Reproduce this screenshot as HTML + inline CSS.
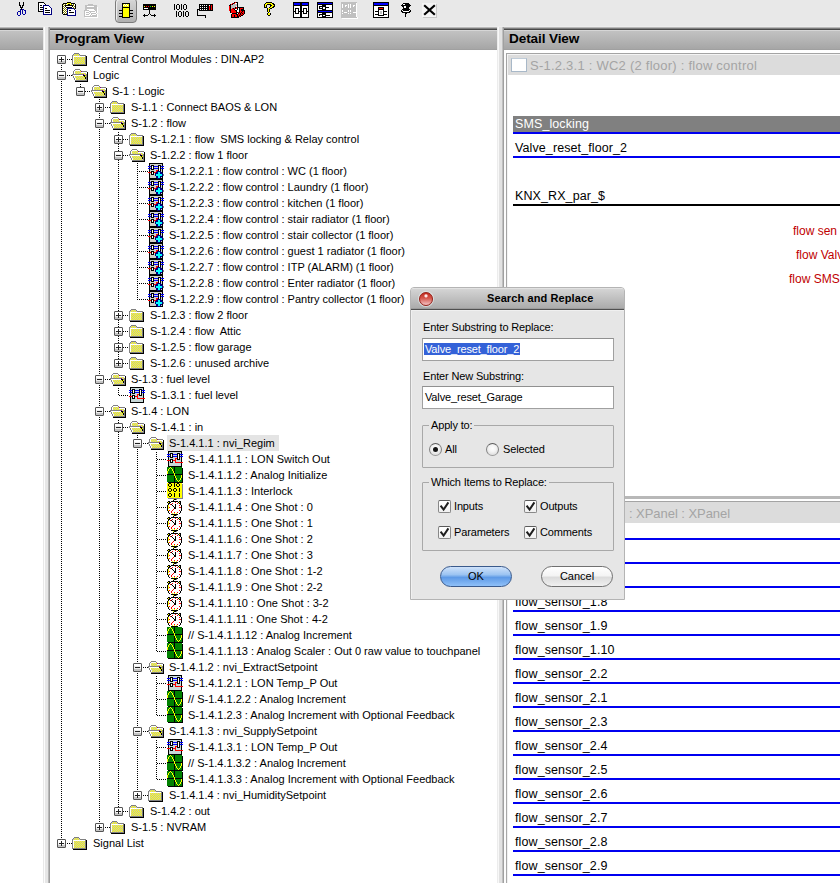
<!DOCTYPE html><html><head><meta charset="utf-8"><style>
*{margin:0;padding:0;box-sizing:border-box}
html,body{width:840px;height:883px;overflow:hidden;background:#e8e8e8;font-family:"Liberation Sans",sans-serif;position:relative}
.px{position:absolute;shape-rendering:crispEdges;overflow:visible}
.vd{position:absolute;width:1px;background:repeating-linear-gradient(to bottom,#000 0 1px,transparent 1px 2px)}
.hd{position:absolute;height:1px;background:repeating-linear-gradient(to right,#000 0 1px,transparent 1px 2px)}
.tt{position:absolute;font-size:11px;line-height:16px;height:16px;white-space:pre;color:#000}
.sel{position:absolute;height:16px;background:#e4e4e4}
.hdr{position:absolute;top:27px;height:23px;background:linear-gradient(to bottom,#bcbcbc 0,#b4b4b4 1px,#484848 2px,#484848 3px,#d6d6d6 3px,#d6d6d6 4px,#c2c2c2 4px,#a6a6a6 22px,#a0a0a0 22px)}
.hdr b{position:absolute;left:5px;top:4px;font-size:13.6px;line-height:16px;font-weight:bold;letter-spacing:-0.12px;color:#000;white-space:nowrap}
.white{position:absolute;background:#fff}
.dt{position:absolute;font-size:12.5px;line-height:16px;white-space:nowrap;color:#000;letter-spacing:0.1px}
.bl{position:absolute;left:513px;width:340px;height:2px;background:#0000f0}
.rt{position:absolute;font-size:12px;line-height:16px;white-space:nowrap;color:#c00000}
.mt{position:absolute;font-size:13px;line-height:18px;letter-spacing:0.24px;white-space:nowrap;color:#a4a4a4}
.cb{position:absolute;width:16px;height:14px;background:#fff;border:1px solid #a8b8c8;border-top-color:#c0ccd8}
#dlg{position:absolute;left:410px;top:287px;width:215px;height:313px;background:#e6e6e6;border:1px solid #b4b4b4;border-radius:4px 4px 0 0;box-shadow:inset 1px 1px 0 #f0f0f0}
.dtitle{position:absolute;left:0;top:0;width:213px;height:23px;border-radius:3px 3px 0 0;background:linear-gradient(to bottom,#e2e2e2 0,#e2e2e2 1px,#d4d4d4 1px,#acacac 20px,#9c9c9c 20px,#9c9c9c 21px,#505050 21px,#505050 22px,#f0f0f0 22px)}
.rbtn{position:absolute;left:8px;top:4px;width:14px;height:14px;border-radius:50%;border:1px solid #982018;background:radial-gradient(circle at 50% 24%,#ffffff 0,#fbe0e0 9%,rgba(255,255,255,0) 20%),linear-gradient(to bottom,#c42a1c 0%,#d65a50 45%,#f0b4b4 92%);box-shadow:0 0 0 1px rgba(235,240,240,0.6)}
.dttl{position:absolute;left:76px;top:3px;font-size:11px;line-height:14px;font-weight:bold;letter-spacing:0.1px;color:#000;white-space:nowrap}
.lab{position:absolute;font-size:11px;line-height:14px;white-space:nowrap;color:#000;letter-spacing:-0.15px}
.glab{background:#e6e6e6;padding:0 2px;margin-left:-2px}
.inp{position:absolute;width:192px;height:23px;background:#fff;border:1px solid #a0a0a0;border-top-color:#909090;font-size:11px;line-height:14px;padding:3px 0 0 1px;white-space:nowrap;letter-spacing:-0.15px}
.inp span{display:inline-block;padding:0 1px;height:12px;line-height:12px}
.inp .hl{background:#3462d8;color:#fff}
.grp{position:absolute;border:1px solid #a8a8a8;border-radius:1px}
.radio{position:absolute;width:13px;height:13px;border-radius:50%;border:1px solid #808080;border-top-color:#5c5c5c;border-bottom-color:#9a9a9a;background:radial-gradient(circle at 50% 40%,#ffffff 0,#f4f4f4 40%,#d0d0d0 100%)}
.radio.on::after{content:"";position:absolute;left:3px;top:3px;width:5px;height:5px;border-radius:50%;background:#161616}
.chk{position:absolute;width:13px;height:13px;border:1px solid #888;border-top-color:#5a5a5a;border-radius:2px;background:linear-gradient(#fff,#f0f0f0)}

.btn{position:absolute;width:72px;height:21px;border-radius:11px;border:1px solid #707070;font-size:11px;line-height:19px;text-align:center;color:#000;background:linear-gradient(to bottom,#ffffff 0,#f4f4f4 45%,#dcdcdc 55%,#f0f0f0 100%)}
.btn.ok{border-color:#3a5a8c;background:linear-gradient(to bottom,#cfe2fa 0,#9cc4f2 40%,#5e9ae6 55%,#8fc0f8 100%)}
</style></head><body><svg width="0" height="0" style="position:absolute"><symbol id="i-folder" viewBox="0 0 16 16"><rect x="2" y="2" width="5" height="1" fill="#808080"/><rect x="1" y="3" width="1" height="1" fill="#808080"/><rect x="2" y="3" width="1" height="1" fill="#c0c0c0"/><rect x="3" y="3" width="1" height="1" fill="#ffff00"/><rect x="4" y="3" width="1" height="1" fill="#c0c0c0"/><rect x="5" y="3" width="1" height="1" fill="#ffff00"/><rect x="6" y="3" width="1" height="1" fill="#c0c0c0"/><rect x="7" y="3" width="1" height="1" fill="#808080"/><rect x="0" y="4" width="1" height="1" fill="#808080"/><rect x="1" y="4" width="1" height="1" fill="#c0c0c0"/><rect x="2" y="4" width="1" height="1" fill="#ffff00"/><rect x="3" y="4" width="1" height="1" fill="#c0c0c0"/><rect x="4" y="4" width="1" height="1" fill="#ffff00"/><rect x="5" y="4" width="1" height="1" fill="#c0c0c0"/><rect x="6" y="4" width="1" height="1" fill="#ffff00"/><rect x="7" y="4" width="1" height="1" fill="#c0c0c0"/><rect x="8" y="4" width="6" height="1" fill="#808080"/><rect x="0" y="5" width="1" height="1" fill="#808080"/><rect x="1" y="5" width="12" height="1" fill="#ffffff"/><rect x="13" y="5" width="1" height="1" fill="#808080"/><rect x="14" y="5" width="1" height="1" fill="#000000"/><rect x="0" y="6" width="1" height="1" fill="#808080"/><rect x="1" y="6" width="1" height="1" fill="#ffffff"/><rect x="2" y="6" width="1" height="1" fill="#ffff00"/><rect x="3" y="6" width="1" height="1" fill="#c0c0c0"/><rect x="4" y="6" width="1" height="1" fill="#ffff00"/><rect x="5" y="6" width="1" height="1" fill="#c0c0c0"/><rect x="6" y="6" width="1" height="1" fill="#ffff00"/><rect x="7" y="6" width="1" height="1" fill="#c0c0c0"/><rect x="8" y="6" width="1" height="1" fill="#ffff00"/><rect x="9" y="6" width="1" height="1" fill="#c0c0c0"/><rect x="10" y="6" width="1" height="1" fill="#ffff00"/><rect x="11" y="6" width="1" height="1" fill="#c0c0c0"/><rect x="12" y="6" width="1" height="1" fill="#ffff00"/><rect x="13" y="6" width="1" height="1" fill="#808080"/><rect x="14" y="6" width="1" height="1" fill="#000000"/><rect x="0" y="7" width="1" height="1" fill="#808080"/><rect x="1" y="7" width="1" height="1" fill="#ffffff"/><rect x="2" y="7" width="1" height="1" fill="#c0c0c0"/><rect x="3" y="7" width="1" height="1" fill="#ffff00"/><rect x="4" y="7" width="1" height="1" fill="#c0c0c0"/><rect x="5" y="7" width="1" height="1" fill="#ffff00"/><rect x="6" y="7" width="1" height="1" fill="#c0c0c0"/><rect x="7" y="7" width="1" height="1" fill="#ffff00"/><rect x="8" y="7" width="1" height="1" fill="#c0c0c0"/><rect x="9" y="7" width="1" height="1" fill="#ffff00"/><rect x="10" y="7" width="1" height="1" fill="#c0c0c0"/><rect x="11" y="7" width="1" height="1" fill="#ffff00"/><rect x="12" y="7" width="1" height="1" fill="#c0c0c0"/><rect x="13" y="7" width="1" height="1" fill="#808080"/><rect x="14" y="7" width="1" height="1" fill="#000000"/><rect x="0" y="8" width="1" height="1" fill="#808080"/><rect x="1" y="8" width="1" height="1" fill="#ffffff"/><rect x="2" y="8" width="1" height="1" fill="#ffff00"/><rect x="3" y="8" width="1" height="1" fill="#c0c0c0"/><rect x="4" y="8" width="1" height="1" fill="#ffff00"/><rect x="5" y="8" width="1" height="1" fill="#c0c0c0"/><rect x="6" y="8" width="1" height="1" fill="#ffff00"/><rect x="7" y="8" width="1" height="1" fill="#c0c0c0"/><rect x="8" y="8" width="1" height="1" fill="#ffff00"/><rect x="9" y="8" width="1" height="1" fill="#c0c0c0"/><rect x="10" y="8" width="1" height="1" fill="#ffff00"/><rect x="11" y="8" width="1" height="1" fill="#c0c0c0"/><rect x="12" y="8" width="1" height="1" fill="#ffff00"/><rect x="13" y="8" width="1" height="1" fill="#808080"/><rect x="14" y="8" width="1" height="1" fill="#000000"/><rect x="0" y="9" width="1" height="1" fill="#808080"/><rect x="1" y="9" width="1" height="1" fill="#ffffff"/><rect x="2" y="9" width="1" height="1" fill="#c0c0c0"/><rect x="3" y="9" width="1" height="1" fill="#ffff00"/><rect x="4" y="9" width="1" height="1" fill="#c0c0c0"/><rect x="5" y="9" width="1" height="1" fill="#ffff00"/><rect x="6" y="9" width="1" height="1" fill="#c0c0c0"/><rect x="7" y="9" width="1" height="1" fill="#ffff00"/><rect x="8" y="9" width="1" height="1" fill="#c0c0c0"/><rect x="9" y="9" width="1" height="1" fill="#ffff00"/><rect x="10" y="9" width="1" height="1" fill="#c0c0c0"/><rect x="11" y="9" width="1" height="1" fill="#ffff00"/><rect x="12" y="9" width="1" height="1" fill="#c0c0c0"/><rect x="13" y="9" width="1" height="1" fill="#808080"/><rect x="14" y="9" width="1" height="1" fill="#000000"/><rect x="0" y="10" width="1" height="1" fill="#808080"/><rect x="1" y="10" width="1" height="1" fill="#ffffff"/><rect x="2" y="10" width="1" height="1" fill="#ffff00"/><rect x="3" y="10" width="1" height="1" fill="#c0c0c0"/><rect x="4" y="10" width="1" height="1" fill="#ffff00"/><rect x="5" y="10" width="1" height="1" fill="#c0c0c0"/><rect x="6" y="10" width="1" height="1" fill="#ffff00"/><rect x="7" y="10" width="1" height="1" fill="#c0c0c0"/><rect x="8" y="10" width="1" height="1" fill="#ffff00"/><rect x="9" y="10" width="1" height="1" fill="#c0c0c0"/><rect x="10" y="10" width="1" height="1" fill="#ffff00"/><rect x="11" y="10" width="1" height="1" fill="#c0c0c0"/><rect x="12" y="10" width="1" height="1" fill="#ffff00"/><rect x="13" y="10" width="1" height="1" fill="#808080"/><rect x="14" y="10" width="1" height="1" fill="#000000"/><rect x="0" y="11" width="1" height="1" fill="#808080"/><rect x="1" y="11" width="1" height="1" fill="#ffffff"/><rect x="2" y="11" width="1" height="1" fill="#c0c0c0"/><rect x="3" y="11" width="1" height="1" fill="#ffff00"/><rect x="4" y="11" width="1" height="1" fill="#c0c0c0"/><rect x="5" y="11" width="1" height="1" fill="#ffff00"/><rect x="6" y="11" width="1" height="1" fill="#c0c0c0"/><rect x="7" y="11" width="1" height="1" fill="#ffff00"/><rect x="8" y="11" width="1" height="1" fill="#c0c0c0"/><rect x="9" y="11" width="1" height="1" fill="#ffff00"/><rect x="10" y="11" width="1" height="1" fill="#c0c0c0"/><rect x="11" y="11" width="1" height="1" fill="#ffff00"/><rect x="12" y="11" width="1" height="1" fill="#c0c0c0"/><rect x="13" y="11" width="1" height="1" fill="#808080"/><rect x="14" y="11" width="1" height="1" fill="#000000"/><rect x="0" y="12" width="1" height="1" fill="#808080"/><rect x="1" y="12" width="1" height="1" fill="#ffffff"/><rect x="2" y="12" width="1" height="1" fill="#ffff00"/><rect x="3" y="12" width="1" height="1" fill="#c0c0c0"/><rect x="4" y="12" width="1" height="1" fill="#ffff00"/><rect x="5" y="12" width="1" height="1" fill="#c0c0c0"/><rect x="6" y="12" width="1" height="1" fill="#ffff00"/><rect x="7" y="12" width="1" height="1" fill="#c0c0c0"/><rect x="8" y="12" width="1" height="1" fill="#ffff00"/><rect x="9" y="12" width="1" height="1" fill="#c0c0c0"/><rect x="10" y="12" width="1" height="1" fill="#ffff00"/><rect x="11" y="12" width="1" height="1" fill="#c0c0c0"/><rect x="12" y="12" width="1" height="1" fill="#ffff00"/><rect x="13" y="12" width="1" height="1" fill="#808080"/><rect x="14" y="12" width="1" height="1" fill="#000000"/><rect x="0" y="13" width="14" height="1" fill="#808080"/><rect x="14" y="13" width="1" height="1" fill="#000000"/><rect x="1" y="14" width="14" height="1" fill="#000000"/></symbol><symbol id="i-ofolder" viewBox="0 0 16 16"><rect x="3" y="2" width="5" height="1" fill="#808080"/><rect x="2" y="3" width="1" height="1" fill="#808080"/><rect x="3" y="3" width="5" height="1" fill="#ffffff"/><rect x="8" y="3" width="1" height="1" fill="#808080"/><rect x="1" y="4" width="1" height="1" fill="#808080"/><rect x="2" y="4" width="1" height="1" fill="#ffffff"/><rect x="3" y="4" width="1" height="1" fill="#c0c0c0"/><rect x="4" y="4" width="1" height="1" fill="#ffff00"/><rect x="5" y="4" width="1" height="1" fill="#c0c0c0"/><rect x="6" y="4" width="1" height="1" fill="#ffff00"/><rect x="7" y="4" width="1" height="1" fill="#c0c0c0"/><rect x="8" y="4" width="1" height="1" fill="#ffff00"/><rect x="9" y="4" width="1" height="1" fill="#800080"/><rect x="10" y="4" width="5" height="1" fill="#808080"/><rect x="1" y="5" width="1" height="1" fill="#808080"/><rect x="2" y="5" width="1" height="1" fill="#ffffff"/><rect x="3" y="5" width="1" height="1" fill="#ffff00"/><rect x="4" y="5" width="1" height="1" fill="#c0c0c0"/><rect x="5" y="5" width="1" height="1" fill="#ffff00"/><rect x="6" y="5" width="1" height="1" fill="#c0c0c0"/><rect x="7" y="5" width="1" height="1" fill="#ffff00"/><rect x="8" y="5" width="1" height="1" fill="#c0c0c0"/><rect x="9" y="5" width="6" height="1" fill="#ffffff"/><rect x="15" y="5" width="1" height="1" fill="#000000"/><rect x="1" y="6" width="1" height="1" fill="#808080"/><rect x="2" y="6" width="1" height="1" fill="#ffffff"/><rect x="3" y="6" width="1" height="1" fill="#c0c0c0"/><rect x="4" y="6" width="1" height="1" fill="#ffff00"/><rect x="5" y="6" width="1" height="1" fill="#c0c0c0"/><rect x="6" y="6" width="1" height="1" fill="#ffff00"/><rect x="7" y="6" width="1" height="1" fill="#c0c0c0"/><rect x="8" y="6" width="1" height="1" fill="#ffff00"/><rect x="9" y="6" width="1" height="1" fill="#c0c0c0"/><rect x="10" y="6" width="1" height="1" fill="#ffff00"/><rect x="11" y="6" width="1" height="1" fill="#c0c0c0"/><rect x="12" y="6" width="1" height="1" fill="#ffff00"/><rect x="13" y="6" width="1" height="1" fill="#c0c0c0"/><rect x="14" y="6" width="1" height="1" fill="#ffffff"/><rect x="15" y="6" width="1" height="1" fill="#000000"/><rect x="0" y="7" width="11" height="1" fill="#808080"/><rect x="11" y="7" width="1" height="1" fill="#800080"/><rect x="12" y="7" width="1" height="1" fill="#c0c0c0"/><rect x="13" y="7" width="1" height="1" fill="#ffff00"/><rect x="14" y="7" width="1" height="1" fill="#808080"/><rect x="15" y="7" width="1" height="1" fill="#000000"/><rect x="0" y="8" width="1" height="1" fill="#808080"/><rect x="1" y="8" width="10" height="1" fill="#ffffff"/><rect x="11" y="8" width="2" height="1" fill="#000000"/><rect x="13" y="8" width="2" height="1" fill="#808080"/><rect x="15" y="8" width="1" height="1" fill="#000000"/><rect x="1" y="9" width="1" height="1" fill="#808080"/><rect x="2" y="9" width="1" height="1" fill="#ffffff"/><rect x="3" y="9" width="1" height="1" fill="#ffff00"/><rect x="4" y="9" width="1" height="1" fill="#c0c0c0"/><rect x="5" y="9" width="1" height="1" fill="#ffff00"/><rect x="6" y="9" width="1" height="1" fill="#c0c0c0"/><rect x="7" y="9" width="1" height="1" fill="#ffff00"/><rect x="8" y="9" width="1" height="1" fill="#c0c0c0"/><rect x="9" y="9" width="1" height="1" fill="#ffff00"/><rect x="10" y="9" width="1" height="1" fill="#c0c0c0"/><rect x="11" y="9" width="1" height="1" fill="#ffff00"/><rect x="12" y="9" width="1" height="1" fill="#000000"/><rect x="13" y="9" width="1" height="1" fill="#ffff00"/><rect x="14" y="9" width="1" height="1" fill="#808080"/><rect x="15" y="9" width="1" height="1" fill="#000000"/><rect x="1" y="10" width="1" height="1" fill="#808080"/><rect x="2" y="10" width="1" height="1" fill="#ffffff"/><rect x="3" y="10" width="1" height="1" fill="#c0c0c0"/><rect x="4" y="10" width="1" height="1" fill="#ffff00"/><rect x="5" y="10" width="1" height="1" fill="#c0c0c0"/><rect x="6" y="10" width="1" height="1" fill="#ffff00"/><rect x="7" y="10" width="1" height="1" fill="#c0c0c0"/><rect x="8" y="10" width="1" height="1" fill="#ffff00"/><rect x="9" y="10" width="1" height="1" fill="#c0c0c0"/><rect x="10" y="10" width="1" height="1" fill="#ffff00"/><rect x="11" y="10" width="1" height="1" fill="#c0c0c0"/><rect x="12" y="10" width="1" height="1" fill="#ffff00"/><rect x="13" y="10" width="1" height="1" fill="#000000"/><rect x="14" y="10" width="1" height="1" fill="#808080"/><rect x="15" y="10" width="1" height="1" fill="#000000"/><rect x="2" y="11" width="1" height="1" fill="#808080"/><rect x="3" y="11" width="1" height="1" fill="#ffffff"/><rect x="4" y="11" width="1" height="1" fill="#c0c0c0"/><rect x="5" y="11" width="1" height="1" fill="#ffff00"/><rect x="6" y="11" width="1" height="1" fill="#c0c0c0"/><rect x="7" y="11" width="1" height="1" fill="#ffff00"/><rect x="8" y="11" width="1" height="1" fill="#c0c0c0"/><rect x="9" y="11" width="1" height="1" fill="#ffff00"/><rect x="10" y="11" width="1" height="1" fill="#c0c0c0"/><rect x="11" y="11" width="1" height="1" fill="#ffff00"/><rect x="12" y="11" width="1" height="1" fill="#c0c0c0"/><rect x="13" y="11" width="1" height="1" fill="#000000"/><rect x="14" y="11" width="1" height="1" fill="#808080"/><rect x="15" y="11" width="1" height="1" fill="#000000"/><rect x="2" y="12" width="1" height="1" fill="#808080"/><rect x="3" y="12" width="1" height="1" fill="#ffffff"/><rect x="4" y="12" width="1" height="1" fill="#ffff00"/><rect x="5" y="12" width="1" height="1" fill="#c0c0c0"/><rect x="6" y="12" width="1" height="1" fill="#ffff00"/><rect x="7" y="12" width="1" height="1" fill="#c0c0c0"/><rect x="8" y="12" width="1" height="1" fill="#ffff00"/><rect x="9" y="12" width="1" height="1" fill="#c0c0c0"/><rect x="10" y="12" width="1" height="1" fill="#ffff00"/><rect x="11" y="12" width="1" height="1" fill="#c0c0c0"/><rect x="12" y="12" width="1" height="1" fill="#ffff00"/><rect x="13" y="12" width="1" height="1" fill="#c0c0c0"/><rect x="14" y="12" width="1" height="1" fill="#808080"/><rect x="15" y="12" width="1" height="1" fill="#000000"/><rect x="3" y="13" width="12" height="1" fill="#808080"/><rect x="15" y="13" width="1" height="1" fill="#000000"/><rect x="3" y="14" width="13" height="1" fill="#000000"/></symbol><symbol id="i-modplus" viewBox="0 0 16 16"><rect x="1" y="0" width="14" height="1" fill="#000000"/><rect x="1" y="1" width="1" height="1" fill="#000000"/><rect x="2" y="1" width="12" height="1" fill="#cfcfc8"/><rect x="14" y="1" width="1" height="1" fill="#000000"/><rect x="1" y="2" width="1" height="1" fill="#000000"/><rect x="2" y="2" width="1" height="1" fill="#cfcfc8"/><rect x="3" y="2" width="3" height="1" fill="#000000"/><rect x="6" y="2" width="4" height="1" fill="#cfcfc8"/><rect x="10" y="2" width="3" height="1" fill="#000000"/><rect x="13" y="2" width="1" height="1" fill="#cfcfc8"/><rect x="14" y="2" width="1" height="1" fill="#000000"/><rect x="0" y="3" width="3" height="1" fill="#0000ff"/><rect x="3" y="3" width="1" height="1" fill="#000000"/><rect x="4" y="3" width="1" height="1" fill="#ffffff"/><rect x="5" y="3" width="1" height="1" fill="#000000"/><rect x="6" y="3" width="4" height="1" fill="#0000ff"/><rect x="10" y="3" width="1" height="1" fill="#000000"/><rect x="11" y="3" width="1" height="1" fill="#ffffff"/><rect x="12" y="3" width="1" height="1" fill="#000000"/><rect x="13" y="3" width="3" height="1" fill="#0000ff"/><rect x="1" y="4" width="1" height="1" fill="#000000"/><rect x="2" y="4" width="1" height="1" fill="#cfcfc8"/><rect x="3" y="4" width="1" height="1" fill="#000000"/><rect x="4" y="4" width="1" height="1" fill="#ffffff"/><rect x="5" y="4" width="1" height="1" fill="#000000"/><rect x="6" y="4" width="4" height="1" fill="#cfcfc8"/><rect x="10" y="4" width="1" height="1" fill="#000000"/><rect x="11" y="4" width="1" height="1" fill="#ffffff"/><rect x="12" y="4" width="1" height="1" fill="#000000"/><rect x="13" y="4" width="1" height="1" fill="#cfcfc8"/><rect x="14" y="4" width="1" height="1" fill="#000000"/><rect x="0" y="5" width="3" height="1" fill="#0000ff"/><rect x="3" y="5" width="1" height="1" fill="#000000"/><rect x="4" y="5" width="1" height="1" fill="#ffffff"/><rect x="5" y="5" width="1" height="1" fill="#000000"/><rect x="6" y="5" width="4" height="1" fill="#0000ff"/><rect x="10" y="5" width="1" height="1" fill="#000000"/><rect x="11" y="5" width="1" height="1" fill="#ffffff"/><rect x="12" y="5" width="1" height="1" fill="#000000"/><rect x="13" y="5" width="3" height="1" fill="#0000ff"/><rect x="1" y="6" width="1" height="1" fill="#000000"/><rect x="2" y="6" width="1" height="1" fill="#cfcfc8"/><rect x="3" y="6" width="3" height="1" fill="#000000"/><rect x="6" y="6" width="4" height="1" fill="#cfcfc8"/><rect x="10" y="6" width="1" height="1" fill="#000000"/><rect x="11" y="6" width="1" height="1" fill="#ffffff"/><rect x="12" y="6" width="1" height="1" fill="#000000"/><rect x="13" y="6" width="1" height="1" fill="#cfcfc8"/><rect x="14" y="6" width="1" height="1" fill="#000000"/><rect x="1" y="7" width="1" height="1" fill="#000000"/><rect x="2" y="7" width="6" height="1" fill="#cfcfc8"/><rect x="8" y="7" width="2" height="1" fill="#ff0000"/><rect x="10" y="7" width="1" height="1" fill="#000000"/><rect x="11" y="7" width="1" height="1" fill="#ffffff"/><rect x="12" y="7" width="1" height="1" fill="#000000"/><rect x="13" y="7" width="1" height="1" fill="#cfcfc8"/><rect x="14" y="7" width="1" height="1" fill="#000000"/><rect x="1" y="8" width="1" height="1" fill="#000000"/><rect x="2" y="8" width="1" height="1" fill="#cfcfc8"/><rect x="3" y="8" width="3" height="1" fill="#000000"/><rect x="6" y="8" width="2" height="1" fill="#cfcfc8"/><rect x="8" y="8" width="1" height="1" fill="#ff0000"/><rect x="9" y="8" width="4" height="1" fill="#000080"/><rect x="13" y="8" width="1" height="1" fill="#cfcfc8"/><rect x="14" y="8" width="1" height="1" fill="#000000"/><rect x="0" y="9" width="3" height="1" fill="#ff0000"/><rect x="3" y="9" width="1" height="1" fill="#000000"/><rect x="4" y="9" width="1" height="1" fill="#ffffff"/><rect x="5" y="9" width="1" height="1" fill="#000000"/><rect x="6" y="9" width="2" height="1" fill="#ff0000"/><rect x="8" y="9" width="2" height="1" fill="#000080"/><rect x="10" y="9" width="2" height="1" fill="#00ffff"/><rect x="12" y="9" width="2" height="1" fill="#000080"/><rect x="14" y="9" width="1" height="1" fill="#000000"/><rect x="1" y="10" width="1" height="1" fill="#000000"/><rect x="2" y="10" width="1" height="1" fill="#cfcfc8"/><rect x="3" y="10" width="1" height="1" fill="#000000"/><rect x="4" y="10" width="1" height="1" fill="#ffffff"/><rect x="5" y="10" width="1" height="1" fill="#000000"/><rect x="6" y="10" width="1" height="1" fill="#cfcfc8"/><rect x="7" y="10" width="3" height="1" fill="#000080"/><rect x="10" y="10" width="2" height="1" fill="#00ffff"/><rect x="12" y="10" width="3" height="1" fill="#000080"/><rect x="1" y="11" width="1" height="1" fill="#000000"/><rect x="2" y="11" width="1" height="1" fill="#cfcfc8"/><rect x="3" y="11" width="3" height="1" fill="#000000"/><rect x="6" y="11" width="1" height="1" fill="#cfcfc8"/><rect x="7" y="11" width="1" height="1" fill="#000080"/><rect x="8" y="11" width="6" height="1" fill="#00ffff"/><rect x="14" y="11" width="1" height="1" fill="#000080"/><rect x="15" y="11" width="1" height="1" fill="#808080"/><rect x="1" y="12" width="1" height="1" fill="#000000"/><rect x="2" y="12" width="5" height="1" fill="#cfcfc8"/><rect x="7" y="12" width="1" height="1" fill="#000080"/><rect x="8" y="12" width="6" height="1" fill="#00ffff"/><rect x="14" y="12" width="1" height="1" fill="#000080"/><rect x="15" y="12" width="1" height="1" fill="#808080"/><rect x="1" y="13" width="1" height="1" fill="#000000"/><rect x="2" y="13" width="6" height="1" fill="#cfcfc8"/><rect x="8" y="13" width="2" height="1" fill="#000080"/><rect x="10" y="13" width="2" height="1" fill="#00ffff"/><rect x="12" y="13" width="2" height="1" fill="#000080"/><rect x="14" y="13" width="1" height="1" fill="#000000"/><rect x="1" y="14" width="1" height="1" fill="#000000"/><rect x="2" y="14" width="6" height="1" fill="#cfcfc8"/><rect x="8" y="14" width="2" height="1" fill="#000080"/><rect x="10" y="14" width="2" height="1" fill="#00ffff"/><rect x="12" y="14" width="1" height="1" fill="#000080"/><rect x="13" y="14" width="1" height="1" fill="#cfcfc8"/><rect x="14" y="14" width="1" height="1" fill="#000000"/><rect x="1" y="15" width="8" height="1" fill="#000000"/><rect x="9" y="15" width="3" height="1" fill="#000080"/><rect x="12" y="15" width="3" height="1" fill="#000000"/></symbol><symbol id="i-mod" viewBox="0 0 16 16"><rect x="1" y="0" width="14" height="1" fill="#000000"/><rect x="1" y="1" width="1" height="1" fill="#000000"/><rect x="2" y="1" width="12" height="1" fill="#c8d8d8"/><rect x="14" y="1" width="1" height="1" fill="#000000"/><rect x="1" y="2" width="1" height="1" fill="#000000"/><rect x="2" y="2" width="1" height="1" fill="#c8d8d8"/><rect x="3" y="2" width="3" height="1" fill="#000000"/><rect x="6" y="2" width="4" height="1" fill="#c8d8d8"/><rect x="10" y="2" width="3" height="1" fill="#000000"/><rect x="13" y="2" width="1" height="1" fill="#c8d8d8"/><rect x="14" y="2" width="1" height="1" fill="#000000"/><rect x="0" y="3" width="3" height="1" fill="#0000ff"/><rect x="3" y="3" width="1" height="1" fill="#000000"/><rect x="4" y="3" width="1" height="1" fill="#ffffff"/><rect x="5" y="3" width="1" height="1" fill="#000000"/><rect x="6" y="3" width="4" height="1" fill="#0000ff"/><rect x="10" y="3" width="1" height="1" fill="#000000"/><rect x="11" y="3" width="1" height="1" fill="#ffffff"/><rect x="12" y="3" width="1" height="1" fill="#000000"/><rect x="13" y="3" width="3" height="1" fill="#0000ff"/><rect x="1" y="4" width="1" height="1" fill="#000000"/><rect x="2" y="4" width="1" height="1" fill="#c8d8d8"/><rect x="3" y="4" width="1" height="1" fill="#000000"/><rect x="4" y="4" width="1" height="1" fill="#ffffff"/><rect x="5" y="4" width="1" height="1" fill="#000000"/><rect x="6" y="4" width="4" height="1" fill="#c8d8d8"/><rect x="10" y="4" width="1" height="1" fill="#000000"/><rect x="11" y="4" width="1" height="1" fill="#ffffff"/><rect x="12" y="4" width="1" height="1" fill="#000000"/><rect x="13" y="4" width="1" height="1" fill="#c8d8d8"/><rect x="14" y="4" width="1" height="1" fill="#000000"/><rect x="0" y="5" width="3" height="1" fill="#0000ff"/><rect x="3" y="5" width="1" height="1" fill="#000000"/><rect x="4" y="5" width="1" height="1" fill="#ffffff"/><rect x="5" y="5" width="1" height="1" fill="#000000"/><rect x="6" y="5" width="4" height="1" fill="#0000ff"/><rect x="10" y="5" width="1" height="1" fill="#000000"/><rect x="11" y="5" width="1" height="1" fill="#ffffff"/><rect x="12" y="5" width="1" height="1" fill="#000000"/><rect x="13" y="5" width="3" height="1" fill="#0000ff"/><rect x="1" y="6" width="1" height="1" fill="#000000"/><rect x="2" y="6" width="1" height="1" fill="#c8d8d8"/><rect x="3" y="6" width="3" height="1" fill="#000000"/><rect x="6" y="6" width="4" height="1" fill="#c8d8d8"/><rect x="10" y="6" width="1" height="1" fill="#000000"/><rect x="11" y="6" width="1" height="1" fill="#ffffff"/><rect x="12" y="6" width="1" height="1" fill="#000000"/><rect x="13" y="6" width="1" height="1" fill="#c8d8d8"/><rect x="14" y="6" width="1" height="1" fill="#000000"/><rect x="1" y="7" width="1" height="1" fill="#000000"/><rect x="2" y="7" width="6" height="1" fill="#c8d8d8"/><rect x="8" y="7" width="2" height="1" fill="#ff0000"/><rect x="10" y="7" width="1" height="1" fill="#000000"/><rect x="11" y="7" width="1" height="1" fill="#ffffff"/><rect x="12" y="7" width="1" height="1" fill="#000000"/><rect x="13" y="7" width="1" height="1" fill="#c8d8d8"/><rect x="14" y="7" width="1" height="1" fill="#000000"/><rect x="1" y="8" width="1" height="1" fill="#000000"/><rect x="2" y="8" width="1" height="1" fill="#c8d8d8"/><rect x="3" y="8" width="3" height="1" fill="#000000"/><rect x="6" y="8" width="2" height="1" fill="#c8d8d8"/><rect x="8" y="8" width="1" height="1" fill="#ff0000"/><rect x="9" y="8" width="1" height="1" fill="#c8d8d8"/><rect x="10" y="8" width="3" height="1" fill="#000000"/><rect x="13" y="8" width="1" height="1" fill="#c8d8d8"/><rect x="14" y="8" width="1" height="1" fill="#000000"/><rect x="0" y="9" width="3" height="1" fill="#ff0000"/><rect x="3" y="9" width="1" height="1" fill="#000000"/><rect x="4" y="9" width="1" height="1" fill="#ffffff"/><rect x="5" y="9" width="1" height="1" fill="#000000"/><rect x="6" y="9" width="3" height="1" fill="#ff0000"/><rect x="9" y="9" width="5" height="1" fill="#c8d8d8"/><rect x="14" y="9" width="1" height="1" fill="#000000"/><rect x="1" y="10" width="1" height="1" fill="#000000"/><rect x="2" y="10" width="1" height="1" fill="#c8d8d8"/><rect x="3" y="10" width="1" height="1" fill="#000000"/><rect x="4" y="10" width="1" height="1" fill="#ffffff"/><rect x="5" y="10" width="1" height="1" fill="#000000"/><rect x="6" y="10" width="2" height="1" fill="#c8d8d8"/><rect x="8" y="10" width="1" height="1" fill="#ff0000"/><rect x="9" y="10" width="5" height="1" fill="#c8d8d8"/><rect x="14" y="10" width="1" height="1" fill="#000000"/><rect x="1" y="11" width="1" height="1" fill="#000000"/><rect x="2" y="11" width="1" height="1" fill="#c8d8d8"/><rect x="3" y="11" width="3" height="1" fill="#000000"/><rect x="6" y="11" width="2" height="1" fill="#c8d8d8"/><rect x="8" y="11" width="8" height="1" fill="#ff0000"/><rect x="1" y="12" width="1" height="1" fill="#000000"/><rect x="2" y="12" width="12" height="1" fill="#c8d8d8"/><rect x="14" y="12" width="1" height="1" fill="#000000"/><rect x="1" y="13" width="1" height="1" fill="#000000"/><rect x="2" y="13" width="12" height="1" fill="#c8d8d8"/><rect x="14" y="13" width="1" height="1" fill="#000000"/><rect x="1" y="14" width="1" height="1" fill="#000000"/><rect x="2" y="14" width="12" height="1" fill="#c8d8d8"/><rect x="14" y="14" width="1" height="1" fill="#000000"/><rect x="1" y="15" width="14" height="1" fill="#000000"/></symbol><symbol id="i-wave" viewBox="0 0 16 16"><rect x="0" y="0" width="3" height="1" fill="#008000"/><rect x="3" y="0" width="1" height="1" fill="#ffff00"/><rect x="4" y="0" width="3" height="1" fill="#008000"/><rect x="7" y="0" width="1" height="1" fill="#000000"/><rect x="8" y="0" width="7" height="1" fill="#008000"/><rect x="0" y="1" width="2" height="1" fill="#008000"/><rect x="2" y="1" width="1" height="1" fill="#ffff00"/><rect x="3" y="1" width="1" height="1" fill="#008000"/><rect x="4" y="1" width="1" height="1" fill="#ffff00"/><rect x="5" y="1" width="2" height="1" fill="#008000"/><rect x="7" y="1" width="1" height="1" fill="#000000"/><rect x="8" y="1" width="7" height="1" fill="#008000"/><rect x="15" y="1" width="1" height="1" fill="#000000"/><rect x="0" y="2" width="1" height="1" fill="#008000"/><rect x="1" y="2" width="1" height="1" fill="#ffff00"/><rect x="2" y="2" width="3" height="1" fill="#008000"/><rect x="5" y="2" width="1" height="1" fill="#ffff00"/><rect x="6" y="2" width="1" height="1" fill="#008000"/><rect x="7" y="2" width="1" height="1" fill="#000000"/><rect x="8" y="2" width="7" height="1" fill="#008000"/><rect x="15" y="2" width="1" height="1" fill="#000000"/><rect x="0" y="3" width="1" height="1" fill="#008000"/><rect x="1" y="3" width="1" height="1" fill="#ffff00"/><rect x="2" y="3" width="3" height="1" fill="#008000"/><rect x="5" y="3" width="1" height="1" fill="#ffff00"/><rect x="6" y="3" width="1" height="1" fill="#008000"/><rect x="7" y="3" width="1" height="1" fill="#000000"/><rect x="8" y="3" width="7" height="1" fill="#008000"/><rect x="15" y="3" width="1" height="1" fill="#000000"/><rect x="0" y="4" width="1" height="1" fill="#ffff00"/><rect x="1" y="4" width="5" height="1" fill="#008000"/><rect x="6" y="4" width="1" height="1" fill="#ffff00"/><rect x="7" y="4" width="1" height="1" fill="#000000"/><rect x="8" y="4" width="7" height="1" fill="#008000"/><rect x="15" y="4" width="1" height="1" fill="#000000"/><rect x="0" y="5" width="1" height="1" fill="#ffff00"/><rect x="1" y="5" width="5" height="1" fill="#008000"/><rect x="6" y="5" width="1" height="1" fill="#ffff00"/><rect x="7" y="5" width="1" height="1" fill="#000000"/><rect x="8" y="5" width="7" height="1" fill="#008000"/><rect x="15" y="5" width="1" height="1" fill="#000000"/><rect x="0" y="6" width="1" height="1" fill="#ffff00"/><rect x="1" y="6" width="6" height="1" fill="#008000"/><rect x="7" y="6" width="1" height="1" fill="#ffff00"/><rect x="8" y="6" width="7" height="1" fill="#008000"/><rect x="15" y="6" width="1" height="1" fill="#000000"/><rect x="0" y="7" width="7" height="1" fill="#000000"/><rect x="7" y="7" width="1" height="1" fill="#ffff00"/><rect x="8" y="7" width="8" height="1" fill="#000000"/><rect x="0" y="8" width="7" height="1" fill="#008000"/><rect x="7" y="8" width="1" height="1" fill="#ffff00"/><rect x="8" y="8" width="6" height="1" fill="#008000"/><rect x="14" y="8" width="1" height="1" fill="#ffff00"/><rect x="15" y="8" width="1" height="1" fill="#000000"/><rect x="0" y="9" width="7" height="1" fill="#008000"/><rect x="7" y="9" width="1" height="1" fill="#000000"/><rect x="8" y="9" width="1" height="1" fill="#ffff00"/><rect x="9" y="9" width="5" height="1" fill="#008000"/><rect x="14" y="9" width="1" height="1" fill="#ffff00"/><rect x="15" y="9" width="1" height="1" fill="#000000"/><rect x="0" y="10" width="7" height="1" fill="#008000"/><rect x="7" y="10" width="1" height="1" fill="#000000"/><rect x="8" y="10" width="1" height="1" fill="#ffff00"/><rect x="9" y="10" width="5" height="1" fill="#008000"/><rect x="14" y="10" width="1" height="1" fill="#ffff00"/><rect x="15" y="10" width="1" height="1" fill="#000000"/><rect x="0" y="11" width="7" height="1" fill="#008000"/><rect x="7" y="11" width="1" height="1" fill="#000000"/><rect x="8" y="11" width="1" height="1" fill="#008000"/><rect x="9" y="11" width="1" height="1" fill="#ffff00"/><rect x="10" y="11" width="3" height="1" fill="#008000"/><rect x="13" y="11" width="1" height="1" fill="#ffff00"/><rect x="14" y="11" width="1" height="1" fill="#008000"/><rect x="15" y="11" width="1" height="1" fill="#000000"/><rect x="0" y="12" width="7" height="1" fill="#008000"/><rect x="7" y="12" width="1" height="1" fill="#000000"/><rect x="8" y="12" width="1" height="1" fill="#008000"/><rect x="9" y="12" width="1" height="1" fill="#ffff00"/><rect x="10" y="12" width="3" height="1" fill="#008000"/><rect x="13" y="12" width="1" height="1" fill="#ffff00"/><rect x="14" y="12" width="1" height="1" fill="#008000"/><rect x="15" y="12" width="1" height="1" fill="#000000"/><rect x="0" y="13" width="7" height="1" fill="#008000"/><rect x="7" y="13" width="1" height="1" fill="#000000"/><rect x="8" y="13" width="2" height="1" fill="#008000"/><rect x="10" y="13" width="1" height="1" fill="#ffff00"/><rect x="11" y="13" width="1" height="1" fill="#008000"/><rect x="12" y="13" width="1" height="1" fill="#ffff00"/><rect x="13" y="13" width="2" height="1" fill="#008000"/><rect x="15" y="13" width="1" height="1" fill="#000000"/><rect x="0" y="14" width="7" height="1" fill="#008000"/><rect x="7" y="14" width="1" height="1" fill="#000000"/><rect x="8" y="14" width="3" height="1" fill="#008000"/><rect x="11" y="14" width="1" height="1" fill="#ffff00"/><rect x="12" y="14" width="3" height="1" fill="#008000"/><rect x="15" y="14" width="1" height="1" fill="#000000"/><rect x="1" y="15" width="15" height="1" fill="#000000"/></symbol><symbol id="i-bin" viewBox="0 0 16 16"><rect x="0" y="0" width="2" height="1" fill="#ffff00"/><rect x="2" y="0" width="2" height="1" fill="#000000"/><rect x="4" y="0" width="3" height="1" fill="#ffff00"/><rect x="7" y="0" width="1" height="1" fill="#000000"/><rect x="8" y="0" width="2" height="1" fill="#ffff00"/><rect x="10" y="0" width="2" height="1" fill="#000000"/><rect x="12" y="0" width="3" height="1" fill="#ffff00"/><rect x="0" y="1" width="1" height="1" fill="#ffff00"/><rect x="1" y="1" width="1" height="1" fill="#000000"/><rect x="2" y="1" width="2" height="1" fill="#ffff00"/><rect x="4" y="1" width="1" height="1" fill="#000000"/><rect x="5" y="1" width="2" height="1" fill="#ffff00"/><rect x="7" y="1" width="1" height="1" fill="#000000"/><rect x="8" y="1" width="1" height="1" fill="#ffff00"/><rect x="9" y="1" width="1" height="1" fill="#000000"/><rect x="10" y="1" width="2" height="1" fill="#ffff00"/><rect x="12" y="1" width="1" height="1" fill="#000000"/><rect x="13" y="1" width="2" height="1" fill="#ffff00"/><rect x="15" y="1" width="1" height="1" fill="#808098"/><rect x="0" y="2" width="1" height="1" fill="#ffff00"/><rect x="1" y="2" width="1" height="1" fill="#000000"/><rect x="2" y="2" width="2" height="1" fill="#ffff00"/><rect x="4" y="2" width="1" height="1" fill="#000000"/><rect x="5" y="2" width="2" height="1" fill="#ffff00"/><rect x="7" y="2" width="1" height="1" fill="#000000"/><rect x="8" y="2" width="1" height="1" fill="#ffff00"/><rect x="9" y="2" width="1" height="1" fill="#000000"/><rect x="10" y="2" width="2" height="1" fill="#ffff00"/><rect x="12" y="2" width="1" height="1" fill="#000000"/><rect x="13" y="2" width="2" height="1" fill="#ffff00"/><rect x="15" y="2" width="1" height="1" fill="#808098"/><rect x="0" y="3" width="2" height="1" fill="#ffff00"/><rect x="2" y="3" width="2" height="1" fill="#000000"/><rect x="4" y="3" width="3" height="1" fill="#ffff00"/><rect x="7" y="3" width="1" height="1" fill="#000000"/><rect x="8" y="3" width="2" height="1" fill="#ffff00"/><rect x="10" y="3" width="2" height="1" fill="#000000"/><rect x="12" y="3" width="3" height="1" fill="#ffff00"/><rect x="15" y="3" width="1" height="1" fill="#808098"/><rect x="0" y="4" width="15" height="1" fill="#ffff00"/><rect x="15" y="4" width="1" height="1" fill="#808098"/><rect x="0" y="5" width="2" height="1" fill="#ffff00"/><rect x="2" y="5" width="2" height="1" fill="#000000"/><rect x="4" y="5" width="3" height="1" fill="#ffff00"/><rect x="7" y="5" width="2" height="1" fill="#000000"/><rect x="9" y="5" width="3" height="1" fill="#ffff00"/><rect x="12" y="5" width="1" height="1" fill="#000000"/><rect x="13" y="5" width="2" height="1" fill="#ffff00"/><rect x="15" y="5" width="1" height="1" fill="#808098"/><rect x="0" y="6" width="1" height="1" fill="#ffff00"/><rect x="1" y="6" width="1" height="1" fill="#000000"/><rect x="2" y="6" width="2" height="1" fill="#ffff00"/><rect x="4" y="6" width="1" height="1" fill="#000000"/><rect x="5" y="6" width="1" height="1" fill="#ffff00"/><rect x="6" y="6" width="1" height="1" fill="#000000"/><rect x="7" y="6" width="2" height="1" fill="#ffff00"/><rect x="9" y="6" width="1" height="1" fill="#000000"/><rect x="10" y="6" width="2" height="1" fill="#ffff00"/><rect x="12" y="6" width="1" height="1" fill="#000000"/><rect x="13" y="6" width="2" height="1" fill="#ffff00"/><rect x="15" y="6" width="1" height="1" fill="#808098"/><rect x="0" y="7" width="1" height="1" fill="#ffff00"/><rect x="1" y="7" width="1" height="1" fill="#000000"/><rect x="2" y="7" width="2" height="1" fill="#ffff00"/><rect x="4" y="7" width="1" height="1" fill="#000000"/><rect x="5" y="7" width="1" height="1" fill="#ffff00"/><rect x="6" y="7" width="1" height="1" fill="#000000"/><rect x="7" y="7" width="2" height="1" fill="#ffff00"/><rect x="9" y="7" width="1" height="1" fill="#000000"/><rect x="10" y="7" width="2" height="1" fill="#ffff00"/><rect x="12" y="7" width="1" height="1" fill="#000000"/><rect x="13" y="7" width="2" height="1" fill="#ffff00"/><rect x="15" y="7" width="1" height="1" fill="#808098"/><rect x="0" y="8" width="2" height="1" fill="#ffff00"/><rect x="2" y="8" width="2" height="1" fill="#000000"/><rect x="4" y="8" width="3" height="1" fill="#ffff00"/><rect x="7" y="8" width="2" height="1" fill="#000000"/><rect x="9" y="8" width="3" height="1" fill="#ffff00"/><rect x="12" y="8" width="1" height="1" fill="#000000"/><rect x="13" y="8" width="2" height="1" fill="#ffff00"/><rect x="15" y="8" width="1" height="1" fill="#808098"/><rect x="0" y="9" width="15" height="1" fill="#ffff00"/><rect x="15" y="9" width="1" height="1" fill="#808098"/><rect x="0" y="10" width="2" height="1" fill="#ffff00"/><rect x="2" y="10" width="2" height="1" fill="#000000"/><rect x="4" y="10" width="3" height="1" fill="#ffff00"/><rect x="7" y="10" width="1" height="1" fill="#000000"/><rect x="8" y="10" width="4" height="1" fill="#ffff00"/><rect x="12" y="10" width="1" height="1" fill="#000000"/><rect x="13" y="10" width="2" height="1" fill="#ffff00"/><rect x="15" y="10" width="1" height="1" fill="#808098"/><rect x="0" y="11" width="1" height="1" fill="#ffff00"/><rect x="1" y="11" width="1" height="1" fill="#000000"/><rect x="2" y="11" width="2" height="1" fill="#ffff00"/><rect x="4" y="11" width="1" height="1" fill="#000000"/><rect x="5" y="11" width="2" height="1" fill="#ffff00"/><rect x="7" y="11" width="1" height="1" fill="#000000"/><rect x="8" y="11" width="4" height="1" fill="#ffff00"/><rect x="12" y="11" width="1" height="1" fill="#000000"/><rect x="13" y="11" width="2" height="1" fill="#ffff00"/><rect x="15" y="11" width="1" height="1" fill="#808098"/><rect x="0" y="12" width="1" height="1" fill="#ffff00"/><rect x="1" y="12" width="1" height="1" fill="#000000"/><rect x="2" y="12" width="2" height="1" fill="#ffff00"/><rect x="4" y="12" width="1" height="1" fill="#000000"/><rect x="5" y="12" width="2" height="1" fill="#ffff00"/><rect x="7" y="12" width="1" height="1" fill="#000000"/><rect x="8" y="12" width="4" height="1" fill="#ffff00"/><rect x="12" y="12" width="1" height="1" fill="#000000"/><rect x="13" y="12" width="2" height="1" fill="#ffff00"/><rect x="15" y="12" width="1" height="1" fill="#808098"/><rect x="0" y="13" width="2" height="1" fill="#ffff00"/><rect x="2" y="13" width="2" height="1" fill="#000000"/><rect x="4" y="13" width="3" height="1" fill="#ffff00"/><rect x="7" y="13" width="1" height="1" fill="#000000"/><rect x="8" y="13" width="4" height="1" fill="#ffff00"/><rect x="12" y="13" width="1" height="1" fill="#000000"/><rect x="13" y="13" width="2" height="1" fill="#ffff00"/><rect x="15" y="13" width="1" height="1" fill="#808098"/><rect x="0" y="14" width="15" height="1" fill="#ffff00"/><rect x="15" y="14" width="1" height="1" fill="#808098"/><rect x="1" y="15" width="15" height="1" fill="#808098"/></symbol><symbol id="i-clock" viewBox="0 0 16 16"><rect x="6" y="0" width="1" height="1" fill="#ffff00"/><rect x="7" y="0" width="2" height="1" fill="#000000"/><rect x="9" y="0" width="1" height="1" fill="#808080"/><rect x="6" y="1" width="1" height="1" fill="#000000"/><rect x="1" y="2" width="2" height="1" fill="#000000"/><rect x="4" y="2" width="7" height="1" fill="#000000"/><rect x="12" y="2" width="2" height="1" fill="#000000"/><rect x="0" y="3" width="1" height="1" fill="#000000"/><rect x="1" y="3" width="1" height="1" fill="#ffff00"/><rect x="2" y="3" width="2" height="1" fill="#000000"/><rect x="4" y="3" width="4" height="1" fill="#ffffff"/><rect x="8" y="3" width="1" height="1" fill="#ff0000"/><rect x="9" y="3" width="2" height="1" fill="#ffffff"/><rect x="11" y="3" width="1" height="1" fill="#000000"/><rect x="12" y="3" width="1" height="1" fill="#ffff00"/><rect x="13" y="3" width="1" height="1" fill="#000000"/><rect x="1" y="4" width="2" height="1" fill="#000000"/><rect x="3" y="4" width="2" height="1" fill="#ffffff"/><rect x="5" y="4" width="1" height="1" fill="#ff0000"/><rect x="6" y="4" width="4" height="1" fill="#ffffff"/><rect x="10" y="4" width="1" height="1" fill="#ff0000"/><rect x="11" y="4" width="1" height="1" fill="#ffffff"/><rect x="12" y="4" width="2" height="1" fill="#000000"/><rect x="1" y="5" width="1" height="1" fill="#000000"/><rect x="2" y="5" width="1" height="1" fill="#ffffff"/><rect x="3" y="5" width="1" height="1" fill="#ff0000"/><rect x="4" y="5" width="1" height="1" fill="#000000"/><rect x="5" y="5" width="3" height="1" fill="#ffffff"/><rect x="8" y="5" width="1" height="1" fill="#000000"/><rect x="9" y="5" width="4" height="1" fill="#ffffff"/><rect x="13" y="5" width="1" height="1" fill="#000000"/><rect x="0" y="6" width="1" height="1" fill="#000000"/><rect x="1" y="6" width="1" height="1" fill="#ffff00"/><rect x="2" y="6" width="3" height="1" fill="#ffffff"/><rect x="5" y="6" width="1" height="1" fill="#000000"/><rect x="6" y="6" width="2" height="1" fill="#ffffff"/><rect x="8" y="6" width="1" height="1" fill="#000000"/><rect x="9" y="6" width="3" height="1" fill="#ffffff"/><rect x="12" y="6" width="1" height="1" fill="#ff0000"/><rect x="13" y="6" width="1" height="1" fill="#ffffff"/><rect x="14" y="6" width="1" height="1" fill="#000000"/><rect x="0" y="7" width="1" height="1" fill="#000000"/><rect x="1" y="7" width="1" height="1" fill="#ffff00"/><rect x="2" y="7" width="4" height="1" fill="#ffffff"/><rect x="6" y="7" width="1" height="1" fill="#000000"/><rect x="7" y="7" width="1" height="1" fill="#ffffff"/><rect x="8" y="7" width="1" height="1" fill="#000000"/><rect x="9" y="7" width="5" height="1" fill="#ffffff"/><rect x="14" y="7" width="1" height="1" fill="#000000"/><rect x="0" y="8" width="1" height="1" fill="#000000"/><rect x="1" y="8" width="1" height="1" fill="#ffff00"/><rect x="2" y="8" width="1" height="1" fill="#ff0000"/><rect x="3" y="8" width="4" height="1" fill="#ffffff"/><rect x="7" y="8" width="2" height="1" fill="#000000"/><rect x="9" y="8" width="3" height="1" fill="#ffffff"/><rect x="12" y="8" width="2" height="1" fill="#ff0000"/><rect x="14" y="8" width="1" height="1" fill="#000000"/><rect x="0" y="9" width="1" height="1" fill="#000000"/><rect x="1" y="9" width="1" height="1" fill="#ffff00"/><rect x="2" y="9" width="5" height="1" fill="#ffffff"/><rect x="7" y="9" width="2" height="1" fill="#000000"/><rect x="9" y="9" width="5" height="1" fill="#ffffff"/><rect x="14" y="9" width="1" height="1" fill="#000000"/><rect x="0" y="10" width="1" height="1" fill="#000000"/><rect x="1" y="10" width="5" height="1" fill="#ffffff"/><rect x="6" y="10" width="1" height="1" fill="#ff0000"/><rect x="7" y="10" width="7" height="1" fill="#ffffff"/><rect x="14" y="10" width="1" height="1" fill="#000000"/><rect x="0" y="11" width="1" height="1" fill="#000000"/><rect x="1" y="11" width="1" height="1" fill="#ffff00"/><rect x="2" y="11" width="1" height="1" fill="#ff0000"/><rect x="3" y="11" width="2" height="1" fill="#ffffff"/><rect x="5" y="11" width="1" height="1" fill="#ff0000"/><rect x="6" y="11" width="6" height="1" fill="#ffffff"/><rect x="12" y="11" width="1" height="1" fill="#ff0000"/><rect x="13" y="11" width="1" height="1" fill="#ffffff"/><rect x="14" y="11" width="1" height="1" fill="#000000"/><rect x="1" y="12" width="1" height="1" fill="#000000"/><rect x="2" y="12" width="2" height="1" fill="#ffffff"/><rect x="4" y="12" width="1" height="1" fill="#ff0000"/><rect x="5" y="12" width="8" height="1" fill="#ffffff"/><rect x="13" y="12" width="1" height="1" fill="#000000"/><rect x="1" y="13" width="1" height="1" fill="#000000"/><rect x="2" y="13" width="2" height="1" fill="#ffffff"/><rect x="4" y="13" width="1" height="1" fill="#ff0000"/><rect x="5" y="13" width="2" height="1" fill="#ffffff"/><rect x="7" y="13" width="1" height="1" fill="#ff0000"/><rect x="8" y="13" width="2" height="1" fill="#ffffff"/><rect x="10" y="13" width="1" height="1" fill="#ff0000"/><rect x="11" y="13" width="2" height="1" fill="#ffffff"/><rect x="13" y="13" width="1" height="1" fill="#000000"/><rect x="2" y="14" width="1" height="1" fill="#000000"/><rect x="3" y="14" width="2" height="1" fill="#ffffff"/><rect x="5" y="14" width="1" height="1" fill="#ffff00"/><rect x="6" y="14" width="1" height="1" fill="#ffffff"/><rect x="7" y="14" width="1" height="1" fill="#ffff00"/><rect x="8" y="14" width="1" height="1" fill="#ffffff"/><rect x="9" y="14" width="1" height="1" fill="#ffff00"/><rect x="10" y="14" width="2" height="1" fill="#ffffff"/><rect x="12" y="14" width="1" height="1" fill="#000000"/><rect x="4" y="15" width="7" height="1" fill="#000000"/></symbol><symbol id="i-plus" viewBox="0 0 9 9"><rect x="0" y="0" width="1" height="1" fill="#9a9a9a"/><rect x="1" y="0" width="7" height="1" fill="#545454"/><rect x="8" y="0" width="1" height="1" fill="#9a9a9a"/><rect x="0" y="1" width="1" height="1" fill="#545454"/><rect x="1" y="1" width="7" height="1" fill="#ffffff"/><rect x="8" y="1" width="1" height="1" fill="#545454"/><rect x="0" y="2" width="1" height="1" fill="#545454"/><rect x="1" y="2" width="3" height="1" fill="#ffffff"/><rect x="4" y="2" width="1" height="1" fill="#222222"/><rect x="5" y="2" width="3" height="1" fill="#ffffff"/><rect x="8" y="2" width="1" height="1" fill="#545454"/><rect x="0" y="3" width="1" height="1" fill="#545454"/><rect x="1" y="3" width="3" height="1" fill="#ffffff"/><rect x="4" y="3" width="1" height="1" fill="#222222"/><rect x="5" y="3" width="3" height="1" fill="#ffffff"/><rect x="8" y="3" width="1" height="1" fill="#545454"/><rect x="0" y="4" width="1" height="1" fill="#545454"/><rect x="1" y="4" width="1" height="1" fill="#eeeeee"/><rect x="2" y="4" width="5" height="1" fill="#222222"/><rect x="7" y="4" width="1" height="1" fill="#eeeeee"/><rect x="8" y="4" width="1" height="1" fill="#545454"/><rect x="0" y="5" width="1" height="1" fill="#545454"/><rect x="1" y="5" width="2" height="1" fill="#eeeeee"/><rect x="3" y="5" width="1" height="1" fill="#ffffff"/><rect x="4" y="5" width="1" height="1" fill="#222222"/><rect x="5" y="5" width="1" height="1" fill="#ffffff"/><rect x="6" y="5" width="2" height="1" fill="#eeeeee"/><rect x="8" y="5" width="1" height="1" fill="#545454"/><rect x="0" y="6" width="1" height="1" fill="#545454"/><rect x="1" y="6" width="3" height="1" fill="#c4c4c4"/><rect x="4" y="6" width="1" height="1" fill="#222222"/><rect x="5" y="6" width="3" height="1" fill="#c4c4c4"/><rect x="8" y="6" width="1" height="1" fill="#545454"/><rect x="0" y="7" width="1" height="1" fill="#545454"/><rect x="1" y="7" width="7" height="1" fill="#c4c4c4"/><rect x="8" y="7" width="1" height="1" fill="#545454"/><rect x="0" y="8" width="1" height="1" fill="#9a9a9a"/><rect x="1" y="8" width="7" height="1" fill="#545454"/><rect x="8" y="8" width="1" height="1" fill="#9a9a9a"/></symbol><symbol id="i-minus" viewBox="0 0 9 9"><rect x="0" y="0" width="1" height="1" fill="#9a9a9a"/><rect x="1" y="0" width="7" height="1" fill="#545454"/><rect x="8" y="0" width="1" height="1" fill="#9a9a9a"/><rect x="0" y="1" width="1" height="1" fill="#545454"/><rect x="1" y="1" width="7" height="1" fill="#ffffff"/><rect x="8" y="1" width="1" height="1" fill="#545454"/><rect x="0" y="2" width="1" height="1" fill="#545454"/><rect x="1" y="2" width="7" height="1" fill="#ffffff"/><rect x="8" y="2" width="1" height="1" fill="#545454"/><rect x="0" y="3" width="1" height="1" fill="#545454"/><rect x="1" y="3" width="6" height="1" fill="#eeeeee"/><rect x="7" y="3" width="1" height="1" fill="#ffffff"/><rect x="8" y="3" width="1" height="1" fill="#545454"/><rect x="0" y="4" width="1" height="1" fill="#545454"/><rect x="1" y="4" width="1" height="1" fill="#eeeeee"/><rect x="2" y="4" width="5" height="1" fill="#222222"/><rect x="7" y="4" width="1" height="1" fill="#eeeeee"/><rect x="8" y="4" width="1" height="1" fill="#545454"/><rect x="0" y="5" width="1" height="1" fill="#545454"/><rect x="1" y="5" width="6" height="1" fill="#eeeeee"/><rect x="7" y="5" width="1" height="1" fill="#ffffff"/><rect x="8" y="5" width="1" height="1" fill="#545454"/><rect x="0" y="6" width="1" height="1" fill="#545454"/><rect x="1" y="6" width="7" height="1" fill="#c4c4c4"/><rect x="8" y="6" width="1" height="1" fill="#545454"/><rect x="0" y="7" width="1" height="1" fill="#545454"/><rect x="1" y="7" width="7" height="1" fill="#c4c4c4"/><rect x="8" y="7" width="1" height="1" fill="#545454"/><rect x="0" y="8" width="1" height="1" fill="#9a9a9a"/><rect x="1" y="8" width="7" height="1" fill="#545454"/><rect x="8" y="8" width="1" height="1" fill="#9a9a9a"/></symbol></svg><div style="position:absolute;left:0;top:0;width:840px;height:27px;background:#e8e8e8"></div><div style="position:absolute;left:0;top:26px;width:840px;height:1px;background:#ececec"></div><svg class="px" style="left:14px;top:0px" width="16" height="16"><rect x="5" y="2" width="1" height="1" fill="#000000"/><rect x="9" y="2" width="1" height="1" fill="#000000"/><rect x="5" y="3" width="1" height="1" fill="#000000"/><rect x="9" y="3" width="1" height="1" fill="#000000"/><rect x="5" y="4" width="1" height="1" fill="#000000"/><rect x="9" y="4" width="1" height="1" fill="#000000"/><rect x="5" y="5" width="2" height="1" fill="#000000"/><rect x="8" y="5" width="2" height="1" fill="#000000"/><rect x="6" y="6" width="1" height="1" fill="#000000"/><rect x="8" y="6" width="1" height="1" fill="#000000"/><rect x="6" y="7" width="3" height="1" fill="#000000"/><rect x="7" y="8" width="1" height="1" fill="#000000"/><rect x="6" y="9" width="1" height="1" fill="#0000a0"/><rect x="7" y="9" width="1" height="1" fill="#000000"/><rect x="8" y="9" width="2" height="1" fill="#0000a0"/><rect x="6" y="10" width="1" height="1" fill="#0000a0"/><rect x="8" y="10" width="1" height="1" fill="#0000a0"/><rect x="10" y="10" width="2" height="1" fill="#0000a0"/><rect x="4" y="11" width="3" height="1" fill="#0000a0"/><rect x="8" y="11" width="1" height="1" fill="#0000a0"/><rect x="11" y="11" width="1" height="1" fill="#0000a0"/><rect x="3" y="12" width="1" height="1" fill="#0000a0"/><rect x="6" y="12" width="1" height="1" fill="#0000a0"/><rect x="8" y="12" width="1" height="1" fill="#0000a0"/><rect x="11" y="12" width="1" height="1" fill="#0000a0"/><rect x="3" y="13" width="1" height="1" fill="#0000a0"/><rect x="6" y="13" width="1" height="1" fill="#0000a0"/><rect x="8" y="13" width="1" height="1" fill="#0000a0"/><rect x="11" y="13" width="1" height="1" fill="#0000a0"/><rect x="3" y="14" width="1" height="1" fill="#0000a0"/><rect x="6" y="14" width="1" height="1" fill="#0000a0"/><rect x="9" y="14" width="2" height="1" fill="#0000a0"/><rect x="4" y="15" width="2" height="1" fill="#0000a0"/></svg><svg class="px" style="left:36px;top:0px" width="17" height="16"><rect x="2" y="2" width="6" height="1" fill="#000000"/><rect x="2" y="3" width="1" height="1" fill="#000000"/><rect x="3" y="3" width="5" height="1" fill="#ffffff"/><rect x="8" y="3" width="1" height="1" fill="#000000"/><rect x="2" y="4" width="1" height="1" fill="#000000"/><rect x="3" y="4" width="6" height="1" fill="#ffffff"/><rect x="9" y="4" width="1" height="1" fill="#000000"/><rect x="2" y="5" width="1" height="1" fill="#000000"/><rect x="3" y="5" width="1" height="1" fill="#ffffff"/><rect x="4" y="5" width="2" height="1" fill="#000000"/><rect x="6" y="5" width="1" height="1" fill="#ffffff"/><rect x="7" y="5" width="6" height="1" fill="#000080"/><rect x="2" y="6" width="1" height="1" fill="#000000"/><rect x="3" y="6" width="4" height="1" fill="#ffffff"/><rect x="7" y="6" width="1" height="1" fill="#000080"/><rect x="8" y="6" width="5" height="1" fill="#ffffff"/><rect x="13" y="6" width="1" height="1" fill="#000080"/><rect x="2" y="7" width="1" height="1" fill="#000000"/><rect x="3" y="7" width="1" height="1" fill="#ffffff"/><rect x="4" y="7" width="3" height="1" fill="#000000"/><rect x="7" y="7" width="1" height="1" fill="#000080"/><rect x="8" y="7" width="6" height="1" fill="#ffffff"/><rect x="14" y="7" width="1" height="1" fill="#000080"/><rect x="2" y="8" width="1" height="1" fill="#000000"/><rect x="3" y="8" width="4" height="1" fill="#ffffff"/><rect x="7" y="8" width="1" height="1" fill="#000080"/><rect x="8" y="8" width="1" height="1" fill="#ffffff"/><rect x="9" y="8" width="2" height="1" fill="#000000"/><rect x="11" y="8" width="4" height="1" fill="#ffffff"/><rect x="15" y="8" width="1" height="1" fill="#000080"/><rect x="2" y="9" width="1" height="1" fill="#000000"/><rect x="3" y="9" width="1" height="1" fill="#ffffff"/><rect x="4" y="9" width="3" height="1" fill="#000000"/><rect x="7" y="9" width="1" height="1" fill="#000080"/><rect x="8" y="9" width="7" height="1" fill="#ffffff"/><rect x="15" y="9" width="1" height="1" fill="#000080"/><rect x="2" y="10" width="1" height="1" fill="#000000"/><rect x="3" y="10" width="4" height="1" fill="#ffffff"/><rect x="7" y="10" width="1" height="1" fill="#000080"/><rect x="8" y="10" width="1" height="1" fill="#ffffff"/><rect x="9" y="10" width="5" height="1" fill="#000000"/><rect x="14" y="10" width="1" height="1" fill="#ffffff"/><rect x="15" y="10" width="1" height="1" fill="#000080"/><rect x="2" y="11" width="5" height="1" fill="#000000"/><rect x="7" y="11" width="1" height="1" fill="#000080"/><rect x="8" y="11" width="7" height="1" fill="#ffffff"/><rect x="15" y="11" width="1" height="1" fill="#000080"/><rect x="7" y="12" width="1" height="1" fill="#000080"/><rect x="8" y="12" width="1" height="1" fill="#ffffff"/><rect x="9" y="12" width="5" height="1" fill="#000000"/><rect x="14" y="12" width="1" height="1" fill="#ffffff"/><rect x="15" y="12" width="1" height="1" fill="#000080"/><rect x="7" y="13" width="1" height="1" fill="#000080"/><rect x="8" y="13" width="7" height="1" fill="#ffffff"/><rect x="15" y="13" width="1" height="1" fill="#000080"/><rect x="7" y="14" width="9" height="1" fill="#000080"/></svg><svg class="px" style="left:60px;top:0px" width="17" height="16"><rect x="7" y="2" width="4" height="1" fill="#000000"/><rect x="3" y="3" width="4" height="1" fill="#000000"/><rect x="7" y="3" width="4" height="1" fill="#ffff00"/><rect x="11" y="3" width="4" height="1" fill="#000000"/><rect x="2" y="4" width="1" height="1" fill="#000000"/><rect x="3" y="4" width="1" height="1" fill="#808000"/><rect x="4" y="4" width="1" height="1" fill="#ffffff"/><rect x="5" y="4" width="1" height="1" fill="#808000"/><rect x="6" y="4" width="1" height="1" fill="#ffffff"/><rect x="7" y="4" width="1" height="1" fill="#ffff00"/><rect x="8" y="4" width="2" height="1" fill="#000000"/><rect x="10" y="4" width="1" height="1" fill="#ffff00"/><rect x="11" y="4" width="1" height="1" fill="#808000"/><rect x="12" y="4" width="1" height="1" fill="#ffffff"/><rect x="13" y="4" width="1" height="1" fill="#808000"/><rect x="14" y="4" width="1" height="1" fill="#ffffff"/><rect x="15" y="4" width="1" height="1" fill="#000000"/><rect x="2" y="5" width="1" height="1" fill="#000000"/><rect x="3" y="5" width="1" height="1" fill="#ffffff"/><rect x="4" y="5" width="1" height="1" fill="#808000"/><rect x="5" y="5" width="8" height="1" fill="#000000"/><rect x="13" y="5" width="1" height="1" fill="#808000"/><rect x="14" y="5" width="1" height="1" fill="#ffffff"/><rect x="15" y="5" width="1" height="1" fill="#000000"/><rect x="2" y="6" width="1" height="1" fill="#000000"/><rect x="3" y="6" width="1" height="1" fill="#808000"/><rect x="4" y="6" width="1" height="1" fill="#ffffff"/><rect x="5" y="6" width="1" height="1" fill="#000000"/><rect x="6" y="6" width="6" height="1" fill="#ffffff"/><rect x="12" y="6" width="1" height="1" fill="#000000"/><rect x="13" y="6" width="1" height="1" fill="#ffffff"/><rect x="14" y="6" width="1" height="1" fill="#808000"/><rect x="15" y="6" width="1" height="1" fill="#000000"/><rect x="2" y="7" width="1" height="1" fill="#000000"/><rect x="3" y="7" width="1" height="1" fill="#ffffff"/><rect x="4" y="7" width="1" height="1" fill="#808000"/><rect x="5" y="7" width="1" height="1" fill="#ffffff"/><rect x="6" y="7" width="6" height="1" fill="#000000"/><rect x="12" y="7" width="1" height="1" fill="#ffffff"/><rect x="13" y="7" width="1" height="1" fill="#808000"/><rect x="14" y="7" width="1" height="1" fill="#ffffff"/><rect x="15" y="7" width="1" height="1" fill="#000000"/><rect x="2" y="8" width="1" height="1" fill="#000000"/><rect x="3" y="8" width="1" height="1" fill="#808000"/><rect x="4" y="8" width="1" height="1" fill="#ffffff"/><rect x="5" y="8" width="1" height="1" fill="#808000"/><rect x="6" y="8" width="1" height="1" fill="#ffffff"/><rect x="7" y="8" width="7" height="1" fill="#000080"/><rect x="14" y="8" width="1" height="1" fill="#808000"/><rect x="15" y="8" width="1" height="1" fill="#000000"/><rect x="2" y="9" width="1" height="1" fill="#000000"/><rect x="3" y="9" width="1" height="1" fill="#ffffff"/><rect x="4" y="9" width="1" height="1" fill="#808000"/><rect x="5" y="9" width="1" height="1" fill="#ffffff"/><rect x="6" y="9" width="1" height="1" fill="#808000"/><rect x="7" y="9" width="1" height="1" fill="#000080"/><rect x="8" y="9" width="6" height="1" fill="#ffffff"/><rect x="14" y="9" width="1" height="1" fill="#000080"/><rect x="2" y="10" width="1" height="1" fill="#000000"/><rect x="3" y="10" width="1" height="1" fill="#808000"/><rect x="4" y="10" width="1" height="1" fill="#ffffff"/><rect x="5" y="10" width="1" height="1" fill="#808000"/><rect x="6" y="10" width="1" height="1" fill="#ffffff"/><rect x="7" y="10" width="1" height="1" fill="#000080"/><rect x="8" y="10" width="1" height="1" fill="#ffffff"/><rect x="9" y="10" width="2" height="1" fill="#000000"/><rect x="11" y="10" width="4" height="1" fill="#ffffff"/><rect x="15" y="10" width="1" height="1" fill="#000080"/><rect x="2" y="11" width="1" height="1" fill="#000000"/><rect x="3" y="11" width="1" height="1" fill="#ffffff"/><rect x="4" y="11" width="1" height="1" fill="#808000"/><rect x="5" y="11" width="1" height="1" fill="#ffffff"/><rect x="6" y="11" width="1" height="1" fill="#808000"/><rect x="7" y="11" width="1" height="1" fill="#000080"/><rect x="8" y="11" width="7" height="1" fill="#ffffff"/><rect x="15" y="11" width="1" height="1" fill="#000080"/><rect x="2" y="12" width="1" height="1" fill="#000000"/><rect x="3" y="12" width="1" height="1" fill="#808000"/><rect x="4" y="12" width="1" height="1" fill="#ffffff"/><rect x="5" y="12" width="1" height="1" fill="#808000"/><rect x="6" y="12" width="1" height="1" fill="#ffffff"/><rect x="7" y="12" width="1" height="1" fill="#000080"/><rect x="8" y="12" width="1" height="1" fill="#ffffff"/><rect x="9" y="12" width="5" height="1" fill="#000000"/><rect x="14" y="12" width="1" height="1" fill="#ffffff"/><rect x="15" y="12" width="1" height="1" fill="#000080"/><rect x="2" y="13" width="1" height="1" fill="#000000"/><rect x="3" y="13" width="1" height="1" fill="#ffffff"/><rect x="4" y="13" width="1" height="1" fill="#808000"/><rect x="5" y="13" width="1" height="1" fill="#ffffff"/><rect x="6" y="13" width="1" height="1" fill="#808000"/><rect x="7" y="13" width="1" height="1" fill="#000080"/><rect x="8" y="13" width="7" height="1" fill="#ffffff"/><rect x="15" y="13" width="1" height="1" fill="#000080"/><rect x="3" y="14" width="4" height="1" fill="#000000"/><rect x="7" y="14" width="1" height="1" fill="#000080"/><rect x="8" y="14" width="7" height="1" fill="#ffffff"/><rect x="15" y="14" width="1" height="1" fill="#000080"/><rect x="7" y="15" width="9" height="1" fill="#000080"/></svg><svg class="px" style="left:82px;top:2px" width="17" height="16"><rect x="6" y="2" width="5" height="1" fill="#c0c0c0"/><rect x="3" y="3" width="12" height="1" fill="#c0c0c0"/><rect x="3" y="4" width="2" height="1" fill="#c0c0c0"/><rect x="5" y="4" width="7" height="1" fill="#ffffff"/><rect x="12" y="4" width="3" height="1" fill="#c0c0c0"/><rect x="3" y="5" width="12" height="1" fill="#c0c0c0"/><rect x="15" y="5" width="1" height="1" fill="#ffffff"/><rect x="3" y="6" width="12" height="1" fill="#c0c0c0"/><rect x="15" y="6" width="1" height="1" fill="#ffffff"/><rect x="3" y="7" width="2" height="1" fill="#c0c0c0"/><rect x="5" y="7" width="7" height="1" fill="#ffffff"/><rect x="12" y="7" width="3" height="1" fill="#c0c0c0"/><rect x="15" y="7" width="1" height="1" fill="#ffffff"/><rect x="2" y="8" width="5" height="1" fill="#c0c0c0"/><rect x="7" y="8" width="6" height="1" fill="#ffffff"/><rect x="13" y="8" width="2" height="1" fill="#c0c0c0"/><rect x="15" y="8" width="1" height="1" fill="#ffffff"/><rect x="2" y="9" width="1" height="1" fill="#c0c0c0"/><rect x="3" y="9" width="4" height="1" fill="#ffffff"/><rect x="7" y="9" width="6" height="1" fill="#c0c0c0"/><rect x="13" y="9" width="1" height="1" fill="#ffffff"/><rect x="14" y="9" width="1" height="1" fill="#c0c0c0"/><rect x="15" y="9" width="1" height="1" fill="#ffffff"/><rect x="2" y="10" width="1" height="1" fill="#c0c0c0"/><rect x="3" y="10" width="1" height="1" fill="#ffffff"/><rect x="4" y="10" width="3" height="1" fill="#c0c0c0"/><rect x="7" y="10" width="1" height="1" fill="#ffffff"/><rect x="8" y="10" width="1" height="1" fill="#c0c0c0"/><rect x="9" y="10" width="5" height="1" fill="#ffffff"/><rect x="14" y="10" width="1" height="1" fill="#c0c0c0"/><rect x="15" y="10" width="1" height="1" fill="#ffffff"/><rect x="2" y="11" width="1" height="1" fill="#c0c0c0"/><rect x="3" y="11" width="4" height="1" fill="#ffffff"/><rect x="7" y="11" width="1" height="1" fill="#c0c0c0"/><rect x="8" y="11" width="1" height="1" fill="#ffffff"/><rect x="9" y="11" width="5" height="1" fill="#c0c0c0"/><rect x="14" y="11" width="1" height="1" fill="#ffffff"/><rect x="2" y="12" width="1" height="1" fill="#c0c0c0"/><rect x="3" y="12" width="1" height="1" fill="#ffffff"/><rect x="4" y="12" width="3" height="1" fill="#c0c0c0"/><rect x="7" y="12" width="2" height="1" fill="#ffffff"/><rect x="9" y="12" width="1" height="1" fill="#c0c0c0"/><rect x="10" y="12" width="4" height="1" fill="#ffffff"/><rect x="14" y="12" width="1" height="1" fill="#c0c0c0"/><rect x="15" y="12" width="1" height="1" fill="#ffffff"/><rect x="2" y="13" width="1" height="1" fill="#c0c0c0"/><rect x="3" y="13" width="5" height="1" fill="#ffffff"/><rect x="8" y="13" width="1" height="1" fill="#c0c0c0"/><rect x="9" y="13" width="1" height="1" fill="#ffffff"/><rect x="10" y="13" width="5" height="1" fill="#c0c0c0"/><rect x="15" y="13" width="1" height="1" fill="#ffffff"/><rect x="2" y="14" width="13" height="1" fill="#c0c0c0"/><rect x="15" y="14" width="1" height="1" fill="#ffffff"/><rect x="3" y="15" width="13" height="1" fill="#ffffff"/></svg><div style="position:absolute;left:115px;top:-2px;width:22px;height:25px;border:1px solid #7a7a7a;border-radius:4px;background:linear-gradient(to bottom,#d6d6d6,#c4c4c4 50%,#b0b0b0);box-shadow:inset 1px 1px 1px #f0f0f0"></div><svg class="px" style="left:115px;top:0px" width="18" height="18"><rect x="7" y="3" width="8" height="1" fill="#000000"/><rect x="7" y="4" width="1" height="1" fill="#000000"/><rect x="8" y="4" width="1" height="1" fill="#ffff00"/><rect x="9" y="4" width="1" height="1" fill="#ffffff"/><rect x="10" y="4" width="1" height="1" fill="#ffff00"/><rect x="11" y="4" width="1" height="1" fill="#ffffff"/><rect x="12" y="4" width="2" height="1" fill="#ffff00"/><rect x="14" y="4" width="1" height="1" fill="#000000"/><rect x="7" y="5" width="1" height="1" fill="#000000"/><rect x="8" y="5" width="1" height="1" fill="#ffffff"/><rect x="9" y="5" width="1" height="1" fill="#ffff00"/><rect x="10" y="5" width="1" height="1" fill="#ffffff"/><rect x="11" y="5" width="1" height="1" fill="#ffff00"/><rect x="12" y="5" width="1" height="1" fill="#ffffff"/><rect x="13" y="5" width="1" height="1" fill="#ffff00"/><rect x="14" y="5" width="1" height="1" fill="#000000"/><rect x="7" y="6" width="1" height="1" fill="#000000"/><rect x="8" y="6" width="6" height="1" fill="#ffff00"/><rect x="14" y="6" width="1" height="1" fill="#000000"/><rect x="7" y="7" width="8" height="1" fill="#000000"/><rect x="7" y="8" width="1" height="1" fill="#000000"/><rect x="8" y="8" width="6" height="1" fill="#ffff00"/><rect x="14" y="8" width="1" height="1" fill="#000000"/><rect x="7" y="9" width="1" height="1" fill="#000000"/><rect x="8" y="9" width="6" height="1" fill="#ffff00"/><rect x="14" y="9" width="1" height="1" fill="#000000"/><rect x="4" y="10" width="4" height="1" fill="#000000"/><rect x="8" y="10" width="6" height="1" fill="#ffff00"/><rect x="14" y="10" width="4" height="1" fill="#000000"/><rect x="7" y="11" width="1" height="1" fill="#000000"/><rect x="8" y="11" width="6" height="1" fill="#ffff00"/><rect x="14" y="11" width="1" height="1" fill="#000000"/><rect x="7" y="12" width="1" height="1" fill="#000000"/><rect x="8" y="12" width="6" height="1" fill="#ffff00"/><rect x="14" y="12" width="1" height="1" fill="#000000"/><rect x="4" y="13" width="4" height="1" fill="#000000"/><rect x="8" y="13" width="6" height="1" fill="#ffff00"/><rect x="14" y="13" width="4" height="1" fill="#000000"/><rect x="7" y="14" width="1" height="1" fill="#000000"/><rect x="8" y="14" width="6" height="1" fill="#ffff00"/><rect x="14" y="14" width="1" height="1" fill="#000000"/><rect x="7" y="15" width="1" height="1" fill="#000000"/><rect x="8" y="15" width="6" height="1" fill="#ffff00"/><rect x="14" y="15" width="1" height="1" fill="#000000"/><rect x="4" y="16" width="4" height="1" fill="#000000"/><rect x="8" y="16" width="6" height="1" fill="#ffff00"/><rect x="14" y="16" width="4" height="1" fill="#000000"/><rect x="7" y="17" width="8" height="1" fill="#000000"/></svg><svg class="px" style="left:140px;top:0px" width="16" height="17"><rect x="3" y="4" width="13" height="1" fill="#000000"/><rect x="3" y="5" width="13" height="1" fill="#000000"/><rect x="3" y="6" width="1" height="1" fill="#000000"/><rect x="4" y="6" width="1" height="1" fill="#ffff00"/><rect x="5" y="6" width="1" height="1" fill="#000000"/><rect x="6" y="6" width="1" height="1" fill="#ff0000"/><rect x="7" y="6" width="1" height="1" fill="#000000"/><rect x="8" y="6" width="1" height="1" fill="#ff0000"/><rect x="9" y="6" width="1" height="1" fill="#000000"/><rect x="10" y="6" width="1" height="1" fill="#00e000"/><rect x="11" y="6" width="1" height="1" fill="#000000"/><rect x="12" y="6" width="1" height="1" fill="#ffff00"/><rect x="13" y="6" width="1" height="1" fill="#000000"/><rect x="14" y="6" width="1" height="1" fill="#ffff00"/><rect x="15" y="6" width="1" height="1" fill="#000000"/><rect x="3" y="7" width="13" height="1" fill="#000000"/><rect x="3" y="8" width="1" height="1" fill="#000000"/><rect x="4" y="8" width="4" height="1" fill="#ffffff"/><rect x="8" y="8" width="8" height="1" fill="#000000"/><rect x="3" y="9" width="13" height="1" fill="#000000"/><rect x="9" y="10" width="1" height="1" fill="#000000"/><rect x="9" y="11" width="1" height="1" fill="#000000"/><rect x="9" y="12" width="1" height="1" fill="#000000"/><rect x="9" y="13" width="1" height="1" fill="#000000"/><rect x="4" y="14" width="1" height="1" fill="#000000"/><rect x="8" y="14" width="1" height="1" fill="#000000"/><rect x="10" y="14" width="1" height="1" fill="#000000"/><rect x="14" y="14" width="1" height="1" fill="#000000"/><rect x="3" y="15" width="5" height="1" fill="#000000"/><rect x="11" y="15" width="5" height="1" fill="#000000"/><rect x="4" y="16" width="1" height="1" fill="#000000"/><rect x="14" y="16" width="1" height="1" fill="#000000"/></svg><svg class="px" style="left:170px;top:0px" width="19" height="17"><rect x="4" y="4" width="1" height="1" fill="#000000"/><rect x="7" y="4" width="2" height="1" fill="#000000"/><rect x="11" y="4" width="1" height="1" fill="#000000"/><rect x="14" y="4" width="2" height="1" fill="#000000"/><rect x="4" y="5" width="1" height="1" fill="#000000"/><rect x="6" y="5" width="1" height="1" fill="#000000"/><rect x="9" y="5" width="1" height="1" fill="#000000"/><rect x="11" y="5" width="1" height="1" fill="#000000"/><rect x="13" y="5" width="1" height="1" fill="#000000"/><rect x="16" y="5" width="1" height="1" fill="#000000"/><rect x="4" y="6" width="1" height="1" fill="#000000"/><rect x="6" y="6" width="1" height="1" fill="#000000"/><rect x="9" y="6" width="1" height="1" fill="#000000"/><rect x="11" y="6" width="1" height="1" fill="#000000"/><rect x="13" y="6" width="1" height="1" fill="#000000"/><rect x="16" y="6" width="1" height="1" fill="#000000"/><rect x="4" y="7" width="1" height="1" fill="#000000"/><rect x="6" y="7" width="1" height="1" fill="#000000"/><rect x="9" y="7" width="1" height="1" fill="#000000"/><rect x="11" y="7" width="1" height="1" fill="#000000"/><rect x="13" y="7" width="1" height="1" fill="#000000"/><rect x="16" y="7" width="1" height="1" fill="#000000"/><rect x="4" y="8" width="1" height="1" fill="#000000"/><rect x="6" y="8" width="1" height="1" fill="#000000"/><rect x="9" y="8" width="1" height="1" fill="#000000"/><rect x="11" y="8" width="1" height="1" fill="#000000"/><rect x="13" y="8" width="1" height="1" fill="#000000"/><rect x="16" y="8" width="1" height="1" fill="#000000"/><rect x="4" y="9" width="1" height="1" fill="#000000"/><rect x="7" y="9" width="2" height="1" fill="#000000"/><rect x="11" y="9" width="1" height="1" fill="#000000"/><rect x="14" y="9" width="2" height="1" fill="#000000"/><rect x="6" y="11" width="1" height="1" fill="#000000"/><rect x="9" y="11" width="2" height="1" fill="#000000"/><rect x="13" y="11" width="1" height="1" fill="#000000"/><rect x="16" y="11" width="2" height="1" fill="#000000"/><rect x="6" y="12" width="1" height="1" fill="#000000"/><rect x="8" y="12" width="1" height="1" fill="#000000"/><rect x="11" y="12" width="1" height="1" fill="#000000"/><rect x="13" y="12" width="1" height="1" fill="#000000"/><rect x="15" y="12" width="1" height="1" fill="#000000"/><rect x="18" y="12" width="1" height="1" fill="#000000"/><rect x="6" y="13" width="1" height="1" fill="#000000"/><rect x="8" y="13" width="1" height="1" fill="#000000"/><rect x="11" y="13" width="1" height="1" fill="#000000"/><rect x="13" y="13" width="1" height="1" fill="#000000"/><rect x="15" y="13" width="1" height="1" fill="#000000"/><rect x="18" y="13" width="1" height="1" fill="#000000"/><rect x="6" y="14" width="1" height="1" fill="#000000"/><rect x="8" y="14" width="1" height="1" fill="#000000"/><rect x="11" y="14" width="1" height="1" fill="#000000"/><rect x="13" y="14" width="1" height="1" fill="#000000"/><rect x="15" y="14" width="1" height="1" fill="#000000"/><rect x="18" y="14" width="1" height="1" fill="#000000"/><rect x="6" y="15" width="1" height="1" fill="#000000"/><rect x="8" y="15" width="1" height="1" fill="#000000"/><rect x="11" y="15" width="1" height="1" fill="#000000"/><rect x="13" y="15" width="1" height="1" fill="#000000"/><rect x="15" y="15" width="1" height="1" fill="#000000"/><rect x="18" y="15" width="1" height="1" fill="#000000"/><rect x="6" y="16" width="1" height="1" fill="#000000"/><rect x="9" y="16" width="2" height="1" fill="#000000"/><rect x="13" y="16" width="1" height="1" fill="#000000"/><rect x="16" y="16" width="2" height="1" fill="#000000"/></svg><svg class="px" style="left:194px;top:0px" width="19" height="18"><rect x="5" y="4" width="14" height="1" fill="#000000"/><rect x="5" y="5" width="1" height="1" fill="#000000"/><rect x="6" y="5" width="1" height="1" fill="#ffffff"/><rect x="7" y="5" width="1" height="1" fill="#000000"/><rect x="8" y="5" width="1" height="1" fill="#ffffff"/><rect x="9" y="5" width="1" height="1" fill="#000000"/><rect x="10" y="5" width="1" height="1" fill="#ffffff"/><rect x="11" y="5" width="1" height="1" fill="#000000"/><rect x="12" y="5" width="1" height="1" fill="#ffffff"/><rect x="13" y="5" width="2" height="1" fill="#000000"/><rect x="15" y="5" width="1" height="1" fill="#ffffff"/><rect x="16" y="5" width="1" height="1" fill="#000000"/><rect x="17" y="5" width="1" height="1" fill="#ff0000"/><rect x="18" y="5" width="1" height="1" fill="#000000"/><rect x="5" y="6" width="10" height="1" fill="#000000"/><rect x="15" y="6" width="1" height="1" fill="#ff0000"/><rect x="16" y="6" width="1" height="1" fill="#000000"/><rect x="17" y="6" width="1" height="1" fill="#ff0000"/><rect x="18" y="6" width="1" height="1" fill="#000000"/><rect x="5" y="7" width="1" height="1" fill="#000000"/><rect x="6" y="7" width="1" height="1" fill="#ffffff"/><rect x="7" y="7" width="1" height="1" fill="#000000"/><rect x="8" y="7" width="1" height="1" fill="#ffffff"/><rect x="9" y="7" width="1" height="1" fill="#000000"/><rect x="10" y="7" width="1" height="1" fill="#ffffff"/><rect x="11" y="7" width="1" height="1" fill="#000000"/><rect x="12" y="7" width="1" height="1" fill="#ffffff"/><rect x="13" y="7" width="2" height="1" fill="#000000"/><rect x="15" y="7" width="1" height="1" fill="#ff0000"/><rect x="16" y="7" width="1" height="1" fill="#000000"/><rect x="17" y="7" width="1" height="1" fill="#ff0000"/><rect x="18" y="7" width="1" height="1" fill="#000000"/><rect x="5" y="8" width="10" height="1" fill="#000000"/><rect x="15" y="8" width="1" height="1" fill="#ff0000"/><rect x="16" y="8" width="1" height="1" fill="#000000"/><rect x="17" y="8" width="1" height="1" fill="#ff0000"/><rect x="18" y="8" width="1" height="1" fill="#000000"/><rect x="3" y="9" width="3" height="1" fill="#000000"/><rect x="6" y="9" width="1" height="1" fill="#ffffff"/><rect x="7" y="9" width="1" height="1" fill="#000000"/><rect x="8" y="9" width="1" height="1" fill="#ffffff"/><rect x="9" y="9" width="1" height="1" fill="#000000"/><rect x="10" y="9" width="1" height="1" fill="#ffffff"/><rect x="11" y="9" width="1" height="1" fill="#000000"/><rect x="12" y="9" width="1" height="1" fill="#ffffff"/><rect x="13" y="9" width="2" height="1" fill="#000000"/><rect x="15" y="9" width="1" height="1" fill="#ff0000"/><rect x="16" y="9" width="1" height="1" fill="#000000"/><rect x="17" y="9" width="1" height="1" fill="#ff0000"/><rect x="18" y="9" width="1" height="1" fill="#000000"/><rect x="3" y="10" width="1" height="1" fill="#000000"/><rect x="5" y="10" width="14" height="1" fill="#000000"/><rect x="3" y="11" width="1" height="1" fill="#000000"/><rect x="3" y="12" width="1" height="1" fill="#000000"/><rect x="3" y="13" width="1" height="1" fill="#000000"/><rect x="3" y="14" width="1" height="1" fill="#000000"/><rect x="3" y="15" width="9" height="1" fill="#000000"/><rect x="11" y="16" width="1" height="1" fill="#000000"/><rect x="11" y="17" width="1" height="1" fill="#000000"/></svg><svg class="px" style="left:227px;top:1px" width="20" height="17"><rect x="7" y="1" width="1" height="1" fill="#000000"/><rect x="8" y="1" width="1" height="1" fill="#ff0000"/><rect x="9" y="1" width="2" height="1" fill="#000000"/><rect x="5" y="2" width="1" height="1" fill="#ff0000"/><rect x="6" y="2" width="1" height="1" fill="#000000"/><rect x="7" y="2" width="1" height="1" fill="#ff0000"/><rect x="8" y="2" width="2" height="1" fill="#ffffff"/><rect x="10" y="2" width="1" height="1" fill="#000000"/><rect x="3" y="3" width="1" height="1" fill="#000000"/><rect x="4" y="3" width="1" height="1" fill="#ff0000"/><rect x="5" y="3" width="1" height="1" fill="#000000"/><rect x="6" y="3" width="4" height="1" fill="#c0c0c0"/><rect x="10" y="3" width="1" height="1" fill="#000000"/><rect x="2" y="4" width="2" height="1" fill="#000000"/><rect x="4" y="4" width="6" height="1" fill="#c0c0c0"/><rect x="10" y="4" width="1" height="1" fill="#000000"/><rect x="2" y="5" width="1" height="1" fill="#ff0000"/><rect x="3" y="5" width="1" height="1" fill="#000000"/><rect x="4" y="5" width="5" height="1" fill="#c0c0c0"/><rect x="9" y="5" width="1" height="1" fill="#ffffff"/><rect x="10" y="5" width="1" height="1" fill="#000000"/><rect x="2" y="6" width="1" height="1" fill="#ff0000"/><rect x="3" y="6" width="1" height="1" fill="#000000"/><rect x="4" y="6" width="4" height="1" fill="#c0c0c0"/><rect x="8" y="6" width="1" height="1" fill="#000000"/><rect x="9" y="6" width="1" height="1" fill="#ff0000"/><rect x="10" y="6" width="7" height="1" fill="#000000"/><rect x="2" y="7" width="1" height="1" fill="#ff0000"/><rect x="3" y="7" width="1" height="1" fill="#000000"/><rect x="4" y="7" width="1" height="1" fill="#c0c0c0"/><rect x="5" y="7" width="1" height="1" fill="#ff0000"/><rect x="6" y="7" width="1" height="1" fill="#000000"/><rect x="7" y="7" width="1" height="1" fill="#ff0000"/><rect x="8" y="7" width="1" height="1" fill="#000000"/><rect x="9" y="7" width="1" height="1" fill="#ff0000"/><rect x="10" y="7" width="1" height="1" fill="#000000"/><rect x="11" y="7" width="1" height="1" fill="#ffffff"/><rect x="12" y="7" width="1" height="1" fill="#000000"/><rect x="13" y="7" width="3" height="1" fill="#ff0000"/><rect x="16" y="7" width="1" height="1" fill="#000000"/><rect x="2" y="8" width="1" height="1" fill="#ff0000"/><rect x="3" y="8" width="1" height="1" fill="#000000"/><rect x="4" y="8" width="3" height="1" fill="#ff0000"/><rect x="7" y="8" width="1" height="1" fill="#000000"/><rect x="8" y="8" width="2" height="1" fill="#ffffff"/><rect x="10" y="8" width="1" height="1" fill="#000000"/><rect x="11" y="8" width="1" height="1" fill="#ffffff"/><rect x="12" y="8" width="1" height="1" fill="#000000"/><rect x="13" y="8" width="1" height="1" fill="#ff0000"/><rect x="14" y="8" width="3" height="1" fill="#000000"/><rect x="2" y="9" width="1" height="1" fill="#ff0000"/><rect x="3" y="9" width="1" height="1" fill="#000000"/><rect x="4" y="9" width="4" height="1" fill="#ff0000"/><rect x="8" y="9" width="2" height="1" fill="#000000"/><rect x="10" y="9" width="2" height="1" fill="#ffffff"/><rect x="12" y="9" width="1" height="1" fill="#000000"/><rect x="13" y="9" width="1" height="1" fill="#ff0000"/><rect x="14" y="9" width="4" height="1" fill="#000000"/><rect x="3" y="10" width="1" height="1" fill="#000000"/><rect x="4" y="10" width="5" height="1" fill="#ff0000"/><rect x="9" y="10" width="1" height="1" fill="#000000"/><rect x="10" y="10" width="2" height="1" fill="#ffffff"/><rect x="12" y="10" width="1" height="1" fill="#000000"/><rect x="13" y="10" width="2" height="1" fill="#ff0000"/><rect x="15" y="10" width="1" height="1" fill="#000000"/><rect x="16" y="10" width="1" height="1" fill="#ff0000"/><rect x="17" y="10" width="1" height="1" fill="#000000"/><rect x="3" y="11" width="1" height="1" fill="#000000"/><rect x="4" y="11" width="5" height="1" fill="#ff0000"/><rect x="9" y="11" width="2" height="1" fill="#000000"/><rect x="11" y="11" width="1" height="1" fill="#ff0000"/><rect x="12" y="11" width="1" height="1" fill="#000000"/><rect x="13" y="11" width="1" height="1" fill="#ff0000"/><rect x="14" y="11" width="1" height="1" fill="#000000"/><rect x="15" y="11" width="2" height="1" fill="#ff0000"/><rect x="17" y="11" width="1" height="1" fill="#000000"/><rect x="5" y="12" width="5" height="1" fill="#000000"/><rect x="10" y="12" width="1" height="1" fill="#ffffff"/><rect x="11" y="12" width="1" height="1" fill="#000000"/><rect x="12" y="12" width="1" height="1" fill="#ff0000"/><rect x="13" y="12" width="1" height="1" fill="#000000"/><rect x="14" y="12" width="1" height="1" fill="#ff0000"/><rect x="15" y="12" width="1" height="1" fill="#000000"/><rect x="16" y="12" width="1" height="1" fill="#ff0000"/><rect x="17" y="12" width="1" height="1" fill="#000000"/><rect x="4" y="13" width="1" height="1" fill="#000000"/><rect x="5" y="13" width="4" height="1" fill="#ff0000"/><rect x="9" y="13" width="2" height="1" fill="#000000"/><rect x="11" y="13" width="2" height="1" fill="#ff0000"/><rect x="13" y="13" width="1" height="1" fill="#000000"/><rect x="14" y="13" width="2" height="1" fill="#ff0000"/><rect x="16" y="13" width="1" height="1" fill="#000000"/><rect x="4" y="14" width="1" height="1" fill="#000000"/><rect x="5" y="14" width="2" height="1" fill="#ff0000"/><rect x="7" y="14" width="1" height="1" fill="#000000"/><rect x="8" y="14" width="2" height="1" fill="#ff0000"/><rect x="10" y="14" width="1" height="1" fill="#000000"/><rect x="11" y="14" width="1" height="1" fill="#ff0000"/><rect x="12" y="14" width="1" height="1" fill="#000000"/><rect x="13" y="14" width="1" height="1" fill="#ff0000"/><rect x="14" y="14" width="2" height="1" fill="#000000"/><rect x="4" y="15" width="1" height="1" fill="#000000"/><rect x="5" y="15" width="2" height="1" fill="#ff0000"/><rect x="7" y="15" width="1" height="1" fill="#000000"/><rect x="8" y="15" width="2" height="1" fill="#ff0000"/><rect x="10" y="15" width="2" height="1" fill="#000000"/><rect x="12" y="15" width="1" height="1" fill="#ff0000"/><rect x="13" y="15" width="1" height="1" fill="#000000"/><rect x="4" y="16" width="8" height="1" fill="#000000"/></svg><svg class="px" style="left:260px;top:0px" width="18" height="16"><rect x="6" y="2" width="6" height="1" fill="#000000"/><rect x="5" y="3" width="1" height="1" fill="#000000"/><rect x="6" y="3" width="6" height="1" fill="#ffff00"/><rect x="12" y="3" width="2" height="1" fill="#000000"/><rect x="4" y="4" width="1" height="1" fill="#000000"/><rect x="5" y="4" width="2" height="1" fill="#ffff00"/><rect x="7" y="4" width="4" height="1" fill="#000000"/><rect x="11" y="4" width="2" height="1" fill="#ffff00"/><rect x="13" y="4" width="2" height="1" fill="#000000"/><rect x="4" y="5" width="1" height="1" fill="#000000"/><rect x="5" y="5" width="1" height="1" fill="#ffff00"/><rect x="6" y="5" width="1" height="1" fill="#000000"/><rect x="10" y="5" width="2" height="1" fill="#000000"/><rect x="12" y="5" width="2" height="1" fill="#ffff00"/><rect x="14" y="5" width="1" height="1" fill="#000000"/><rect x="4" y="6" width="1" height="1" fill="#000000"/><rect x="5" y="6" width="1" height="1" fill="#ffff00"/><rect x="6" y="6" width="1" height="1" fill="#000000"/><rect x="10" y="6" width="1" height="1" fill="#000000"/><rect x="11" y="6" width="2" height="1" fill="#ffff00"/><rect x="13" y="6" width="2" height="1" fill="#000000"/><rect x="4" y="7" width="3" height="1" fill="#000000"/><rect x="9" y="7" width="1" height="1" fill="#000000"/><rect x="10" y="7" width="2" height="1" fill="#ffff00"/><rect x="12" y="7" width="2" height="1" fill="#000000"/><rect x="7" y="8" width="1" height="1" fill="#000000"/><rect x="8" y="8" width="2" height="1" fill="#ffff00"/><rect x="10" y="8" width="2" height="1" fill="#000000"/><rect x="7" y="9" width="1" height="1" fill="#000000"/><rect x="8" y="9" width="1" height="1" fill="#ffff00"/><rect x="9" y="9" width="1" height="1" fill="#000000"/><rect x="7" y="10" width="1" height="1" fill="#000000"/><rect x="8" y="10" width="1" height="1" fill="#ffff00"/><rect x="9" y="10" width="1" height="1" fill="#000000"/><rect x="7" y="11" width="1" height="1" fill="#000000"/><rect x="8" y="11" width="1" height="1" fill="#ffff00"/><rect x="9" y="11" width="1" height="1" fill="#000000"/><rect x="8" y="12" width="1" height="1" fill="#000000"/><rect x="7" y="13" width="1" height="1" fill="#000000"/><rect x="8" y="13" width="2" height="1" fill="#ffff00"/><rect x="10" y="13" width="1" height="1" fill="#000000"/><rect x="7" y="14" width="1" height="1" fill="#000000"/><rect x="8" y="14" width="2" height="1" fill="#ffff00"/><rect x="10" y="14" width="1" height="1" fill="#000000"/><rect x="8" y="15" width="2" height="1" fill="#000000"/></svg><svg class="px" style="left:290px;top:0px" width="19" height="18"><rect x="3" y="2" width="16" height="1" fill="#000000"/><rect x="3" y="3" width="1" height="1" fill="#000000"/><rect x="4" y="3" width="6" height="1" fill="#0000ff"/><rect x="10" y="3" width="2" height="1" fill="#000000"/><rect x="12" y="3" width="6" height="1" fill="#0000ff"/><rect x="18" y="3" width="1" height="1" fill="#000000"/><rect x="3" y="4" width="1" height="1" fill="#000000"/><rect x="4" y="4" width="6" height="1" fill="#0000ff"/><rect x="10" y="4" width="2" height="1" fill="#000000"/><rect x="12" y="4" width="6" height="1" fill="#0000ff"/><rect x="18" y="4" width="1" height="1" fill="#000000"/><rect x="3" y="5" width="16" height="1" fill="#000000"/><rect x="3" y="6" width="1" height="1" fill="#000000"/><rect x="4" y="6" width="6" height="1" fill="#ffffff"/><rect x="10" y="6" width="2" height="1" fill="#000000"/><rect x="12" y="6" width="6" height="1" fill="#ffffff"/><rect x="18" y="6" width="1" height="1" fill="#000000"/><rect x="3" y="7" width="1" height="1" fill="#000000"/><rect x="4" y="7" width="6" height="1" fill="#ffffff"/><rect x="10" y="7" width="2" height="1" fill="#000000"/><rect x="12" y="7" width="6" height="1" fill="#ffffff"/><rect x="18" y="7" width="1" height="1" fill="#000000"/><rect x="3" y="8" width="1" height="1" fill="#000000"/><rect x="4" y="8" width="1" height="1" fill="#ffffff"/><rect x="5" y="8" width="4" height="1" fill="#000000"/><rect x="9" y="8" width="1" height="1" fill="#ffffff"/><rect x="10" y="8" width="2" height="1" fill="#000000"/><rect x="12" y="8" width="1" height="1" fill="#ffffff"/><rect x="13" y="8" width="4" height="1" fill="#000000"/><rect x="17" y="8" width="1" height="1" fill="#ffffff"/><rect x="18" y="8" width="1" height="1" fill="#000000"/><rect x="3" y="9" width="1" height="1" fill="#000000"/><rect x="4" y="9" width="1" height="1" fill="#ffffff"/><rect x="5" y="9" width="1" height="1" fill="#000000"/><rect x="6" y="9" width="2" height="1" fill="#ffffff"/><rect x="8" y="9" width="1" height="1" fill="#000000"/><rect x="9" y="9" width="1" height="1" fill="#ffffff"/><rect x="10" y="9" width="2" height="1" fill="#000000"/><rect x="12" y="9" width="1" height="1" fill="#ffffff"/><rect x="13" y="9" width="1" height="1" fill="#000000"/><rect x="14" y="9" width="2" height="1" fill="#ffffff"/><rect x="16" y="9" width="1" height="1" fill="#000000"/><rect x="17" y="9" width="1" height="1" fill="#ffffff"/><rect x="18" y="9" width="1" height="1" fill="#000000"/><rect x="3" y="10" width="1" height="1" fill="#000000"/><rect x="4" y="10" width="1" height="1" fill="#ffffff"/><rect x="5" y="10" width="1" height="1" fill="#000000"/><rect x="6" y="10" width="2" height="1" fill="#ffffff"/><rect x="8" y="10" width="1" height="1" fill="#000000"/><rect x="9" y="10" width="1" height="1" fill="#ffffff"/><rect x="10" y="10" width="2" height="1" fill="#000000"/><rect x="12" y="10" width="1" height="1" fill="#ffffff"/><rect x="13" y="10" width="1" height="1" fill="#000000"/><rect x="14" y="10" width="2" height="1" fill="#ffffff"/><rect x="16" y="10" width="1" height="1" fill="#000000"/><rect x="17" y="10" width="1" height="1" fill="#ffffff"/><rect x="18" y="10" width="1" height="1" fill="#000000"/><rect x="3" y="11" width="3" height="1" fill="#000000"/><rect x="6" y="11" width="2" height="1" fill="#ffffff"/><rect x="8" y="11" width="6" height="1" fill="#000000"/><rect x="14" y="11" width="2" height="1" fill="#ffffff"/><rect x="16" y="11" width="3" height="1" fill="#000000"/><rect x="3" y="12" width="1" height="1" fill="#000000"/><rect x="4" y="12" width="1" height="1" fill="#ffffff"/><rect x="5" y="12" width="1" height="1" fill="#000000"/><rect x="6" y="12" width="2" height="1" fill="#ffffff"/><rect x="8" y="12" width="1" height="1" fill="#000000"/><rect x="9" y="12" width="1" height="1" fill="#ffffff"/><rect x="10" y="12" width="2" height="1" fill="#000000"/><rect x="12" y="12" width="1" height="1" fill="#ffffff"/><rect x="13" y="12" width="1" height="1" fill="#000000"/><rect x="14" y="12" width="2" height="1" fill="#ffffff"/><rect x="16" y="12" width="1" height="1" fill="#000000"/><rect x="17" y="12" width="1" height="1" fill="#ffffff"/><rect x="18" y="12" width="1" height="1" fill="#000000"/><rect x="3" y="13" width="1" height="1" fill="#000000"/><rect x="4" y="13" width="1" height="1" fill="#ffffff"/><rect x="5" y="13" width="4" height="1" fill="#000000"/><rect x="9" y="13" width="1" height="1" fill="#ffffff"/><rect x="10" y="13" width="2" height="1" fill="#000000"/><rect x="12" y="13" width="1" height="1" fill="#ffffff"/><rect x="13" y="13" width="4" height="1" fill="#000000"/><rect x="17" y="13" width="1" height="1" fill="#ffffff"/><rect x="18" y="13" width="1" height="1" fill="#000000"/><rect x="3" y="14" width="1" height="1" fill="#000000"/><rect x="4" y="14" width="6" height="1" fill="#ffffff"/><rect x="10" y="14" width="2" height="1" fill="#000000"/><rect x="12" y="14" width="6" height="1" fill="#ffffff"/><rect x="18" y="14" width="1" height="1" fill="#000000"/><rect x="3" y="15" width="1" height="1" fill="#000000"/><rect x="4" y="15" width="6" height="1" fill="#ffffff"/><rect x="10" y="15" width="2" height="1" fill="#000000"/><rect x="12" y="15" width="6" height="1" fill="#ffffff"/><rect x="18" y="15" width="1" height="1" fill="#000000"/><rect x="3" y="16" width="1" height="1" fill="#000000"/><rect x="4" y="16" width="6" height="1" fill="#ffffff"/><rect x="10" y="16" width="2" height="1" fill="#000000"/><rect x="12" y="16" width="6" height="1" fill="#ffffff"/><rect x="18" y="16" width="1" height="1" fill="#000000"/><rect x="3" y="17" width="16" height="1" fill="#000000"/></svg><svg class="px" style="left:314px;top:0px" width="19" height="18"><rect x="3" y="2" width="16" height="1" fill="#000000"/><rect x="3" y="3" width="1" height="1" fill="#000000"/><rect x="4" y="3" width="14" height="1" fill="#0000ff"/><rect x="18" y="3" width="1" height="1" fill="#000000"/><rect x="3" y="4" width="16" height="1" fill="#000000"/><rect x="3" y="5" width="1" height="1" fill="#000000"/><rect x="4" y="5" width="4" height="1" fill="#ffffff"/><rect x="8" y="5" width="4" height="1" fill="#000000"/><rect x="12" y="5" width="6" height="1" fill="#ffffff"/><rect x="18" y="5" width="1" height="1" fill="#000000"/><rect x="3" y="6" width="1" height="1" fill="#000000"/><rect x="4" y="6" width="1" height="1" fill="#ffffff"/><rect x="5" y="6" width="7" height="1" fill="#000000"/><rect x="12" y="6" width="6" height="1" fill="#ffffff"/><rect x="18" y="6" width="1" height="1" fill="#000000"/><rect x="3" y="7" width="1" height="1" fill="#000000"/><rect x="4" y="7" width="1" height="1" fill="#ffffff"/><rect x="5" y="7" width="1" height="1" fill="#000000"/><rect x="6" y="7" width="2" height="1" fill="#ffffff"/><rect x="8" y="7" width="1" height="1" fill="#000000"/><rect x="9" y="7" width="2" height="1" fill="#ffffff"/><rect x="11" y="7" width="4" height="1" fill="#000000"/><rect x="15" y="7" width="3" height="1" fill="#ffffff"/><rect x="18" y="7" width="1" height="1" fill="#000000"/><rect x="3" y="8" width="1" height="1" fill="#000000"/><rect x="4" y="8" width="1" height="1" fill="#ffffff"/><rect x="5" y="8" width="4" height="1" fill="#000000"/><rect x="9" y="8" width="2" height="1" fill="#ffffff"/><rect x="11" y="8" width="1" height="1" fill="#000000"/><rect x="12" y="8" width="6" height="1" fill="#ffffff"/><rect x="18" y="8" width="1" height="1" fill="#000000"/><rect x="3" y="9" width="1" height="1" fill="#000000"/><rect x="4" y="9" width="4" height="1" fill="#ffffff"/><rect x="8" y="9" width="4" height="1" fill="#000000"/><rect x="12" y="9" width="6" height="1" fill="#ffffff"/><rect x="18" y="9" width="1" height="1" fill="#000000"/><rect x="3" y="10" width="16" height="1" fill="#000000"/><rect x="3" y="11" width="1" height="1" fill="#000000"/><rect x="4" y="11" width="14" height="1" fill="#0000ff"/><rect x="18" y="11" width="1" height="1" fill="#000000"/><rect x="3" y="12" width="16" height="1" fill="#000000"/><rect x="3" y="13" width="1" height="1" fill="#000000"/><rect x="4" y="13" width="4" height="1" fill="#ffffff"/><rect x="8" y="13" width="4" height="1" fill="#000000"/><rect x="12" y="13" width="6" height="1" fill="#ffffff"/><rect x="18" y="13" width="1" height="1" fill="#000000"/><rect x="3" y="14" width="1" height="1" fill="#000000"/><rect x="4" y="14" width="1" height="1" fill="#ffffff"/><rect x="5" y="14" width="7" height="1" fill="#000000"/><rect x="12" y="14" width="6" height="1" fill="#ffffff"/><rect x="18" y="14" width="1" height="1" fill="#000000"/><rect x="3" y="15" width="1" height="1" fill="#000000"/><rect x="4" y="15" width="1" height="1" fill="#ffffff"/><rect x="5" y="15" width="1" height="1" fill="#000000"/><rect x="6" y="15" width="2" height="1" fill="#ffffff"/><rect x="8" y="15" width="1" height="1" fill="#000000"/><rect x="9" y="15" width="2" height="1" fill="#ffffff"/><rect x="11" y="15" width="5" height="1" fill="#000000"/><rect x="16" y="15" width="2" height="1" fill="#ffffff"/><rect x="18" y="15" width="1" height="1" fill="#000000"/><rect x="3" y="16" width="1" height="1" fill="#000000"/><rect x="4" y="16" width="4" height="1" fill="#ffffff"/><rect x="8" y="16" width="4" height="1" fill="#000000"/><rect x="12" y="16" width="6" height="1" fill="#ffffff"/><rect x="18" y="16" width="1" height="1" fill="#000000"/><rect x="3" y="17" width="16" height="1" fill="#000000"/></svg><svg class="px" style="left:338px;top:0px" width="20" height="19"><rect x="3" y="2" width="16" height="1" fill="#c0c0c0"/><rect x="3" y="3" width="15" height="1" fill="#c0c0c0"/><rect x="18" y="3" width="1" height="1" fill="#ffffff"/><rect x="3" y="4" width="1" height="1" fill="#c0c0c0"/><rect x="4" y="4" width="1" height="1" fill="#ffffff"/><rect x="5" y="4" width="5" height="1" fill="#c0c0c0"/><rect x="10" y="4" width="1" height="1" fill="#ffffff"/><rect x="11" y="4" width="1" height="1" fill="#c0c0c0"/><rect x="12" y="4" width="1" height="1" fill="#ffffff"/><rect x="13" y="4" width="5" height="1" fill="#c0c0c0"/><rect x="18" y="4" width="1" height="1" fill="#ffffff"/><rect x="3" y="5" width="1" height="1" fill="#c0c0c0"/><rect x="4" y="5" width="1" height="1" fill="#ffffff"/><rect x="5" y="5" width="2" height="1" fill="#c0c0c0"/><rect x="7" y="5" width="2" height="1" fill="#ffffff"/><rect x="9" y="5" width="1" height="1" fill="#c0c0c0"/><rect x="10" y="5" width="1" height="1" fill="#ffffff"/><rect x="11" y="5" width="1" height="1" fill="#c0c0c0"/><rect x="12" y="5" width="1" height="1" fill="#ffffff"/><rect x="13" y="5" width="2" height="1" fill="#c0c0c0"/><rect x="15" y="5" width="2" height="1" fill="#ffffff"/><rect x="17" y="5" width="1" height="1" fill="#c0c0c0"/><rect x="18" y="5" width="1" height="1" fill="#ffffff"/><rect x="3" y="6" width="1" height="1" fill="#c0c0c0"/><rect x="4" y="6" width="1" height="1" fill="#ffffff"/><rect x="5" y="6" width="2" height="1" fill="#c0c0c0"/><rect x="7" y="6" width="1" height="1" fill="#ffffff"/><rect x="8" y="6" width="2" height="1" fill="#c0c0c0"/><rect x="10" y="6" width="1" height="1" fill="#ffffff"/><rect x="11" y="6" width="1" height="1" fill="#c0c0c0"/><rect x="12" y="6" width="1" height="1" fill="#ffffff"/><rect x="13" y="6" width="2" height="1" fill="#c0c0c0"/><rect x="15" y="6" width="1" height="1" fill="#ffffff"/><rect x="16" y="6" width="2" height="1" fill="#c0c0c0"/><rect x="18" y="6" width="1" height="1" fill="#ffffff"/><rect x="3" y="7" width="1" height="1" fill="#c0c0c0"/><rect x="4" y="7" width="1" height="1" fill="#ffffff"/><rect x="5" y="7" width="5" height="1" fill="#c0c0c0"/><rect x="10" y="7" width="1" height="1" fill="#ffffff"/><rect x="11" y="7" width="1" height="1" fill="#c0c0c0"/><rect x="12" y="7" width="1" height="1" fill="#ffffff"/><rect x="13" y="7" width="5" height="1" fill="#c0c0c0"/><rect x="18" y="7" width="1" height="1" fill="#ffffff"/><rect x="3" y="8" width="15" height="1" fill="#c0c0c0"/><rect x="18" y="8" width="1" height="1" fill="#ffffff"/><rect x="3" y="9" width="15" height="1" fill="#c0c0c0"/><rect x="18" y="9" width="1" height="1" fill="#ffffff"/><rect x="3" y="10" width="1" height="1" fill="#c0c0c0"/><rect x="4" y="10" width="1" height="1" fill="#ffffff"/><rect x="5" y="10" width="5" height="1" fill="#c0c0c0"/><rect x="10" y="10" width="1" height="1" fill="#ffffff"/><rect x="11" y="10" width="1" height="1" fill="#c0c0c0"/><rect x="12" y="10" width="1" height="1" fill="#ffffff"/><rect x="13" y="10" width="5" height="1" fill="#c0c0c0"/><rect x="18" y="10" width="1" height="1" fill="#ffffff"/><rect x="3" y="11" width="1" height="1" fill="#c0c0c0"/><rect x="4" y="11" width="1" height="1" fill="#ffffff"/><rect x="5" y="11" width="5" height="1" fill="#c0c0c0"/><rect x="10" y="11" width="1" height="1" fill="#ffffff"/><rect x="11" y="11" width="1" height="1" fill="#c0c0c0"/><rect x="12" y="11" width="1" height="1" fill="#ffffff"/><rect x="13" y="11" width="5" height="1" fill="#c0c0c0"/><rect x="18" y="11" width="1" height="1" fill="#ffffff"/><rect x="3" y="12" width="3" height="1" fill="#c0c0c0"/><rect x="6" y="12" width="3" height="1" fill="#ffffff"/><rect x="9" y="12" width="6" height="1" fill="#c0c0c0"/><rect x="15" y="12" width="4" height="1" fill="#ffffff"/><rect x="3" y="13" width="1" height="1" fill="#c0c0c0"/><rect x="4" y="13" width="1" height="1" fill="#ffffff"/><rect x="5" y="13" width="5" height="1" fill="#c0c0c0"/><rect x="10" y="13" width="1" height="1" fill="#ffffff"/><rect x="11" y="13" width="1" height="1" fill="#c0c0c0"/><rect x="12" y="13" width="1" height="1" fill="#ffffff"/><rect x="13" y="13" width="5" height="1" fill="#c0c0c0"/><rect x="18" y="13" width="1" height="1" fill="#ffffff"/><rect x="3" y="14" width="15" height="1" fill="#c0c0c0"/><rect x="18" y="14" width="1" height="1" fill="#ffffff"/><rect x="3" y="15" width="15" height="1" fill="#c0c0c0"/><rect x="18" y="15" width="1" height="1" fill="#ffffff"/><rect x="3" y="16" width="15" height="1" fill="#c0c0c0"/><rect x="18" y="16" width="1" height="1" fill="#ffffff"/><rect x="3" y="17" width="16" height="1" fill="#c0c0c0"/><rect x="19" y="17" width="1" height="1" fill="#ffffff"/><rect x="4" y="18" width="16" height="1" fill="#ffffff"/></svg><svg class="px" style="left:370px;top:0px" width="19" height="18"><rect x="3" y="2" width="16" height="1" fill="#000000"/><rect x="3" y="3" width="1" height="1" fill="#000000"/><rect x="4" y="3" width="14" height="1" fill="#0000ff"/><rect x="18" y="3" width="1" height="1" fill="#000000"/><rect x="3" y="4" width="1" height="1" fill="#000000"/><rect x="4" y="4" width="14" height="1" fill="#0000ff"/><rect x="18" y="4" width="1" height="1" fill="#000000"/><rect x="3" y="5" width="16" height="1" fill="#000000"/><rect x="3" y="6" width="1" height="1" fill="#000000"/><rect x="4" y="6" width="14" height="1" fill="#ffffff"/><rect x="18" y="6" width="1" height="1" fill="#000000"/><rect x="3" y="7" width="1" height="1" fill="#000000"/><rect x="4" y="7" width="4" height="1" fill="#ffffff"/><rect x="8" y="7" width="6" height="1" fill="#000000"/><rect x="14" y="7" width="4" height="1" fill="#ffffff"/><rect x="18" y="7" width="1" height="1" fill="#000000"/><rect x="3" y="8" width="1" height="1" fill="#000000"/><rect x="4" y="8" width="4" height="1" fill="#ffffff"/><rect x="8" y="8" width="1" height="1" fill="#000000"/><rect x="9" y="8" width="4" height="1" fill="#ff0000"/><rect x="13" y="8" width="1" height="1" fill="#000000"/><rect x="14" y="8" width="4" height="1" fill="#ffffff"/><rect x="18" y="8" width="1" height="1" fill="#000000"/><rect x="3" y="9" width="1" height="1" fill="#000000"/><rect x="4" y="9" width="4" height="1" fill="#ffffff"/><rect x="8" y="9" width="6" height="1" fill="#000000"/><rect x="14" y="9" width="4" height="1" fill="#ffffff"/><rect x="18" y="9" width="1" height="1" fill="#000000"/><rect x="3" y="10" width="1" height="1" fill="#000000"/><rect x="4" y="10" width="4" height="1" fill="#ffffff"/><rect x="8" y="10" width="1" height="1" fill="#000000"/><rect x="9" y="10" width="4" height="1" fill="#ffffff"/><rect x="13" y="10" width="1" height="1" fill="#000000"/><rect x="14" y="10" width="4" height="1" fill="#ffffff"/><rect x="18" y="10" width="1" height="1" fill="#000000"/><rect x="3" y="11" width="1" height="1" fill="#000000"/><rect x="4" y="11" width="1" height="1" fill="#ffffff"/><rect x="5" y="11" width="4" height="1" fill="#000000"/><rect x="9" y="11" width="1" height="1" fill="#ffffff"/><rect x="10" y="11" width="2" height="1" fill="#c0c0c0"/><rect x="12" y="11" width="1" height="1" fill="#ffffff"/><rect x="13" y="11" width="4" height="1" fill="#000000"/><rect x="17" y="11" width="1" height="1" fill="#ffffff"/><rect x="18" y="11" width="1" height="1" fill="#000000"/><rect x="3" y="12" width="1" height="1" fill="#000000"/><rect x="4" y="12" width="4" height="1" fill="#ffffff"/><rect x="8" y="12" width="1" height="1" fill="#000000"/><rect x="9" y="12" width="1" height="1" fill="#ffffff"/><rect x="10" y="12" width="2" height="1" fill="#c0c0c0"/><rect x="12" y="12" width="1" height="1" fill="#ffffff"/><rect x="13" y="12" width="1" height="1" fill="#000000"/><rect x="14" y="12" width="4" height="1" fill="#ffffff"/><rect x="18" y="12" width="1" height="1" fill="#000000"/><rect x="3" y="13" width="1" height="1" fill="#000000"/><rect x="4" y="13" width="4" height="1" fill="#ffffff"/><rect x="8" y="13" width="1" height="1" fill="#000000"/><rect x="9" y="13" width="1" height="1" fill="#ffffff"/><rect x="10" y="13" width="2" height="1" fill="#c0c0c0"/><rect x="12" y="13" width="1" height="1" fill="#ffffff"/><rect x="13" y="13" width="1" height="1" fill="#000000"/><rect x="14" y="13" width="4" height="1" fill="#ffffff"/><rect x="18" y="13" width="1" height="1" fill="#000000"/><rect x="3" y="14" width="1" height="1" fill="#000000"/><rect x="4" y="14" width="1" height="1" fill="#ffffff"/><rect x="5" y="14" width="4" height="1" fill="#000000"/><rect x="9" y="14" width="4" height="1" fill="#ffffff"/><rect x="13" y="14" width="4" height="1" fill="#000000"/><rect x="17" y="14" width="1" height="1" fill="#ffffff"/><rect x="18" y="14" width="1" height="1" fill="#000000"/><rect x="3" y="15" width="1" height="1" fill="#000000"/><rect x="4" y="15" width="4" height="1" fill="#ffffff"/><rect x="8" y="15" width="6" height="1" fill="#000000"/><rect x="14" y="15" width="4" height="1" fill="#ffffff"/><rect x="18" y="15" width="1" height="1" fill="#000000"/><rect x="3" y="16" width="1" height="1" fill="#000000"/><rect x="4" y="16" width="14" height="1" fill="#ffffff"/><rect x="18" y="16" width="1" height="1" fill="#000000"/><rect x="3" y="17" width="16" height="1" fill="#000000"/></svg><svg class="px" style="left:401px;top:0px" width="10" height="17"><rect x="2" y="3" width="6" height="1" fill="#000000"/><rect x="1" y="4" width="1" height="1" fill="#000000"/><rect x="2" y="4" width="2" height="1" fill="#ffffff"/><rect x="4" y="4" width="5" height="1" fill="#000000"/><rect x="0" y="5" width="10" height="1" fill="#000000"/><rect x="1" y="6" width="2" height="1" fill="#000000"/><rect x="3" y="6" width="2" height="1" fill="#ffffff"/><rect x="5" y="6" width="4" height="1" fill="#000000"/><rect x="2" y="7" width="1" height="1" fill="#000000"/><rect x="3" y="7" width="2" height="1" fill="#ffffff"/><rect x="5" y="7" width="3" height="1" fill="#000000"/><rect x="2" y="8" width="6" height="1" fill="#000000"/><rect x="1" y="9" width="8" height="1" fill="#000000"/><rect x="0" y="10" width="1" height="1" fill="#000000"/><rect x="1" y="10" width="1" height="1" fill="#ffffff"/><rect x="2" y="10" width="6" height="1" fill="#000000"/><rect x="8" y="10" width="1" height="1" fill="#ffffff"/><rect x="9" y="10" width="1" height="1" fill="#000000"/><rect x="0" y="11" width="2" height="1" fill="#000000"/><rect x="2" y="11" width="6" height="1" fill="#ffffff"/><rect x="8" y="11" width="2" height="1" fill="#000000"/><rect x="1" y="12" width="8" height="1" fill="#000000"/><rect x="4" y="13" width="2" height="1" fill="#000000"/><rect x="4" y="14" width="1" height="1" fill="#000000"/><rect x="4" y="15" width="1" height="1" fill="#000000"/><rect x="4" y="16" width="1" height="1" fill="#000000"/></svg><div style="position:absolute;left:422px;top:3px;width:14px;height:14px;background:#f4f4f4;box-shadow:1px 1px 0 #c8c8c8"></div><svg class="px" style="left:424px;top:5px" width="11" height="10"><path d="M1 1 L10 9 M10 1 L1 9" stroke="#000" stroke-width="2.2" stroke-linecap="square" shape-rendering="auto"/></svg><div class="hdr" style="left:0;width:43px"></div><div class="white" style="left:0;top:50px;width:43px;height:833px"></div><div style="position:absolute;left:43px;top:27px;width:7px;height:856px;background:linear-gradient(to right,#e8e8e8 0,#e8e8e8 1px,#fcfcfc 1px,#fcfcfc 2px,#e6e6e6 2px,#e6e6e6 5px,#b8b8b8 5px,#b8b8b8 6px,#9c9c9c 6px)"></div><div class="hdr" style="left:50px;width:447px"><b>Program View</b></div><div class="white" style="left:50px;top:50px;width:447px;height:833px"></div><div style="position:absolute;left:497px;top:27px;width:7px;height:856px;background:linear-gradient(to right,#ececec 0,#ececec 1px,#f8f8f8 1px,#f8f8f8 2px,#e2e2e2 2px,#e2e2e2 5px,#c0c0c0 5px,#c0c0c0 6px,#a0a0a0 6px)"></div><div class="hdr" style="left:504px;width:336px"><b>Detail View</b></div><div class="white" style="left:504px;top:50px;width:336px;height:833px"></div><div style="position:absolute;left:504px;top:50px;width:2px;height:833px;background:#fcfcfc"></div><div style="position:absolute;left:506px;top:53px;width:1px;height:830px;background:#a8a8a8"></div><div style="position:absolute;left:507px;top:54px;width:1px;height:829px;background:#f0f0f0"></div><div style="position:absolute;left:506px;top:53px;width:340px;height:1px;background:#a4a4a4"></div><div style="position:absolute;left:506px;top:53px;width:1px;height:450px;background:#a4a4a4"></div><div style="position:absolute;left:507px;top:54px;width:340px;height:1px;background:#f4f4f4"></div><div style="position:absolute;left:507px;top:54px;width:1px;height:440px;background:#f4f4f4"></div><div style="position:absolute;left:508px;top:55px;width:340px;height:20px;background:#dcdcdc"></div><div class="cb" style="left:511px;top:58px"></div><div class="mt" style="left:530px;top:57px">S-1.2.3.1 : WC2 (2 floor) : flow control</div><div style="position:absolute;left:513px;top:116px;width:340px;height:16px;background:#808080"></div><div class="dt" style="left:515px;top:116px;color:#fff">SMS_locking</div><div class="bl" style="top:132px"></div><div class="dt" style="left:515px;top:140px">Valve_reset_floor_2</div><div class="bl" style="top:156px"></div><div class="dt" style="left:515px;top:188px">KNX_RX_par_$</div><div class="bl" style="top:204px;background:#000"></div><div class="rt" style="left:793px;top:223px">flow sen</div><div class="rt" style="left:796px;top:247px">flow Valv</div><div class="rt" style="left:789px;top:271px">flow SMS</div><div style="position:absolute;left:506px;top:496px;width:340px;height:3px;background:#b8b8b8"></div><div style="position:absolute;left:506px;top:501px;width:340px;height:1px;background:#a4a4a4"></div><div style="position:absolute;left:508px;top:502px;width:340px;height:21px;background:#dcdcdc"></div><div class="mt" style="left:629px;top:505px;letter-spacing:-0.05px">: XPanel : XPanel</div><div class="dt" style="left:515px;top:522px">flow_sensor_1.5</div><div class="bl" style="top:538px"></div><div class="dt" style="left:515px;top:546px">flow_sensor_1.6</div><div class="bl" style="top:562px"></div><div class="dt" style="left:515px;top:570px">flow_sensor_1.7</div><div class="bl" style="top:586px"></div><div class="dt" style="left:515px;top:594px">flow_sensor_1.8</div><div class="bl" style="top:610px"></div><div class="dt" style="left:515px;top:618px">flow_sensor_1.9</div><div class="bl" style="top:634px"></div><div class="dt" style="left:515px;top:642px">flow_sensor_1.10</div><div class="bl" style="top:658px"></div><div class="dt" style="left:515px;top:666px">flow_sensor_2.2</div><div class="bl" style="top:682px"></div><div class="dt" style="left:515px;top:690px">flow_sensor_2.1</div><div class="bl" style="top:706px"></div><div class="dt" style="left:515px;top:714px">flow_sensor_2.3</div><div class="bl" style="top:730px"></div><div class="dt" style="left:515px;top:738px">flow_sensor_2.4</div><div class="bl" style="top:754px"></div><div class="dt" style="left:515px;top:762px">flow_sensor_2.5</div><div class="bl" style="top:778px"></div><div class="dt" style="left:515px;top:786px">flow_sensor_2.6</div><div class="bl" style="top:802px"></div><div class="dt" style="left:515px;top:810px">flow_sensor_2.7</div><div class="bl" style="top:826px"></div><div class="dt" style="left:515px;top:834px">flow_sensor_2.8</div><div class="bl" style="top:850px"></div><div class="dt" style="left:515px;top:858px">flow_sensor_2.9</div><div class="bl" style="top:874px"></div><div class="vd" style="left:61px;top:59px;height:8px"></div><div class="hd" style="left:63px;top:59px;width:9px"></div><div class="vd" style="left:61px;top:67px;height:9px"></div><div class="vd" style="left:61px;top:75px;height:8px"></div><div class="hd" style="left:63px;top:75px;width:9px"></div><div class="vd" style="left:61px;top:83px;height:16px"></div><div class="vd" style="left:80px;top:84px;height:8px"></div><div class="hd" style="left:81px;top:91px;width:10px"></div><div class="vd" style="left:61px;top:99px;height:16px"></div><div class="vd" style="left:99px;top:99px;height:9px"></div><div class="vd" style="left:99px;top:107px;height:8px"></div><div class="hd" style="left:101px;top:107px;width:9px"></div><div class="vd" style="left:61px;top:115px;height:16px"></div><div class="vd" style="left:99px;top:115px;height:9px"></div><div class="vd" style="left:99px;top:123px;height:8px"></div><div class="hd" style="left:101px;top:123px;width:9px"></div><div class="vd" style="left:61px;top:131px;height:16px"></div><div class="vd" style="left:99px;top:131px;height:16px"></div><div class="vd" style="left:118px;top:132px;height:8px"></div><div class="vd" style="left:118px;top:140px;height:7px"></div><div class="hd" style="left:119px;top:139px;width:10px"></div><div class="vd" style="left:61px;top:147px;height:16px"></div><div class="vd" style="left:99px;top:147px;height:16px"></div><div class="vd" style="left:118px;top:148px;height:8px"></div><div class="vd" style="left:118px;top:156px;height:7px"></div><div class="hd" style="left:119px;top:155px;width:10px"></div><div class="vd" style="left:61px;top:163px;height:16px"></div><div class="vd" style="left:99px;top:163px;height:16px"></div><div class="vd" style="left:118px;top:164px;height:15px"></div><div class="vd" style="left:137px;top:163px;height:9px"></div><div class="vd" style="left:137px;top:171px;height:8px"></div><div class="hd" style="left:139px;top:171px;width:9px"></div><div class="vd" style="left:61px;top:179px;height:16px"></div><div class="vd" style="left:99px;top:179px;height:16px"></div><div class="vd" style="left:118px;top:180px;height:15px"></div><div class="vd" style="left:137px;top:179px;height:9px"></div><div class="vd" style="left:137px;top:187px;height:8px"></div><div class="hd" style="left:139px;top:187px;width:9px"></div><div class="vd" style="left:61px;top:195px;height:16px"></div><div class="vd" style="left:99px;top:195px;height:16px"></div><div class="vd" style="left:118px;top:196px;height:15px"></div><div class="vd" style="left:137px;top:195px;height:9px"></div><div class="vd" style="left:137px;top:203px;height:8px"></div><div class="hd" style="left:139px;top:203px;width:9px"></div><div class="vd" style="left:61px;top:211px;height:16px"></div><div class="vd" style="left:99px;top:211px;height:16px"></div><div class="vd" style="left:118px;top:212px;height:15px"></div><div class="vd" style="left:137px;top:211px;height:9px"></div><div class="vd" style="left:137px;top:219px;height:8px"></div><div class="hd" style="left:139px;top:219px;width:9px"></div><div class="vd" style="left:61px;top:227px;height:16px"></div><div class="vd" style="left:99px;top:227px;height:16px"></div><div class="vd" style="left:118px;top:228px;height:15px"></div><div class="vd" style="left:137px;top:227px;height:9px"></div><div class="vd" style="left:137px;top:235px;height:8px"></div><div class="hd" style="left:139px;top:235px;width:9px"></div><div class="vd" style="left:61px;top:243px;height:16px"></div><div class="vd" style="left:99px;top:243px;height:16px"></div><div class="vd" style="left:118px;top:244px;height:15px"></div><div class="vd" style="left:137px;top:243px;height:9px"></div><div class="vd" style="left:137px;top:251px;height:8px"></div><div class="hd" style="left:139px;top:251px;width:9px"></div><div class="vd" style="left:61px;top:259px;height:16px"></div><div class="vd" style="left:99px;top:259px;height:16px"></div><div class="vd" style="left:118px;top:260px;height:15px"></div><div class="vd" style="left:137px;top:259px;height:9px"></div><div class="vd" style="left:137px;top:267px;height:8px"></div><div class="hd" style="left:139px;top:267px;width:9px"></div><div class="vd" style="left:61px;top:275px;height:16px"></div><div class="vd" style="left:99px;top:275px;height:16px"></div><div class="vd" style="left:118px;top:276px;height:15px"></div><div class="vd" style="left:137px;top:275px;height:9px"></div><div class="vd" style="left:137px;top:283px;height:8px"></div><div class="hd" style="left:139px;top:283px;width:9px"></div><div class="vd" style="left:61px;top:291px;height:16px"></div><div class="vd" style="left:99px;top:291px;height:16px"></div><div class="vd" style="left:118px;top:292px;height:15px"></div><div class="vd" style="left:137px;top:291px;height:9px"></div><div class="hd" style="left:139px;top:299px;width:9px"></div><div class="vd" style="left:61px;top:307px;height:16px"></div><div class="vd" style="left:99px;top:307px;height:16px"></div><div class="vd" style="left:118px;top:308px;height:8px"></div><div class="vd" style="left:118px;top:316px;height:7px"></div><div class="hd" style="left:119px;top:315px;width:10px"></div><div class="vd" style="left:61px;top:323px;height:16px"></div><div class="vd" style="left:99px;top:323px;height:16px"></div><div class="vd" style="left:118px;top:324px;height:8px"></div><div class="vd" style="left:118px;top:332px;height:7px"></div><div class="hd" style="left:119px;top:331px;width:10px"></div><div class="vd" style="left:61px;top:339px;height:16px"></div><div class="vd" style="left:99px;top:339px;height:16px"></div><div class="vd" style="left:118px;top:340px;height:8px"></div><div class="vd" style="left:118px;top:348px;height:7px"></div><div class="hd" style="left:119px;top:347px;width:10px"></div><div class="vd" style="left:61px;top:355px;height:16px"></div><div class="vd" style="left:99px;top:355px;height:16px"></div><div class="vd" style="left:118px;top:356px;height:8px"></div><div class="hd" style="left:119px;top:363px;width:10px"></div><div class="vd" style="left:61px;top:371px;height:16px"></div><div class="vd" style="left:99px;top:371px;height:9px"></div><div class="vd" style="left:99px;top:379px;height:8px"></div><div class="hd" style="left:101px;top:379px;width:9px"></div><div class="vd" style="left:61px;top:387px;height:16px"></div><div class="vd" style="left:99px;top:387px;height:16px"></div><div class="vd" style="left:118px;top:388px;height:8px"></div><div class="hd" style="left:119px;top:395px;width:10px"></div><div class="vd" style="left:61px;top:403px;height:16px"></div><div class="vd" style="left:99px;top:403px;height:9px"></div><div class="vd" style="left:99px;top:411px;height:8px"></div><div class="hd" style="left:101px;top:411px;width:9px"></div><div class="vd" style="left:61px;top:419px;height:16px"></div><div class="vd" style="left:99px;top:419px;height:16px"></div><div class="vd" style="left:118px;top:420px;height:8px"></div><div class="vd" style="left:118px;top:428px;height:7px"></div><div class="hd" style="left:119px;top:427px;width:10px"></div><div class="vd" style="left:61px;top:435px;height:16px"></div><div class="vd" style="left:99px;top:435px;height:16px"></div><div class="vd" style="left:118px;top:436px;height:15px"></div><div class="vd" style="left:137px;top:435px;height:9px"></div><div class="vd" style="left:137px;top:443px;height:8px"></div><div class="hd" style="left:139px;top:443px;width:9px"></div><div class="vd" style="left:61px;top:451px;height:16px"></div><div class="vd" style="left:99px;top:451px;height:16px"></div><div class="vd" style="left:118px;top:452px;height:15px"></div><div class="vd" style="left:137px;top:451px;height:16px"></div><div class="vd" style="left:156px;top:452px;height:8px"></div><div class="vd" style="left:156px;top:460px;height:7px"></div><div class="hd" style="left:157px;top:459px;width:10px"></div><div class="vd" style="left:61px;top:467px;height:16px"></div><div class="vd" style="left:99px;top:467px;height:16px"></div><div class="vd" style="left:118px;top:468px;height:15px"></div><div class="vd" style="left:137px;top:467px;height:16px"></div><div class="vd" style="left:156px;top:468px;height:8px"></div><div class="vd" style="left:156px;top:476px;height:7px"></div><div class="hd" style="left:157px;top:475px;width:10px"></div><div class="vd" style="left:61px;top:483px;height:16px"></div><div class="vd" style="left:99px;top:483px;height:16px"></div><div class="vd" style="left:118px;top:484px;height:15px"></div><div class="vd" style="left:137px;top:483px;height:16px"></div><div class="vd" style="left:156px;top:484px;height:8px"></div><div class="vd" style="left:156px;top:492px;height:7px"></div><div class="hd" style="left:157px;top:491px;width:10px"></div><div class="vd" style="left:61px;top:499px;height:16px"></div><div class="vd" style="left:99px;top:499px;height:16px"></div><div class="vd" style="left:118px;top:500px;height:15px"></div><div class="vd" style="left:137px;top:499px;height:16px"></div><div class="vd" style="left:156px;top:500px;height:8px"></div><div class="vd" style="left:156px;top:508px;height:7px"></div><div class="hd" style="left:157px;top:507px;width:10px"></div><div class="vd" style="left:61px;top:515px;height:16px"></div><div class="vd" style="left:99px;top:515px;height:16px"></div><div class="vd" style="left:118px;top:516px;height:15px"></div><div class="vd" style="left:137px;top:515px;height:16px"></div><div class="vd" style="left:156px;top:516px;height:8px"></div><div class="vd" style="left:156px;top:524px;height:7px"></div><div class="hd" style="left:157px;top:523px;width:10px"></div><div class="vd" style="left:61px;top:531px;height:16px"></div><div class="vd" style="left:99px;top:531px;height:16px"></div><div class="vd" style="left:118px;top:532px;height:15px"></div><div class="vd" style="left:137px;top:531px;height:16px"></div><div class="vd" style="left:156px;top:532px;height:8px"></div><div class="vd" style="left:156px;top:540px;height:7px"></div><div class="hd" style="left:157px;top:539px;width:10px"></div><div class="vd" style="left:61px;top:547px;height:16px"></div><div class="vd" style="left:99px;top:547px;height:16px"></div><div class="vd" style="left:118px;top:548px;height:15px"></div><div class="vd" style="left:137px;top:547px;height:16px"></div><div class="vd" style="left:156px;top:548px;height:8px"></div><div class="vd" style="left:156px;top:556px;height:7px"></div><div class="hd" style="left:157px;top:555px;width:10px"></div><div class="vd" style="left:61px;top:563px;height:16px"></div><div class="vd" style="left:99px;top:563px;height:16px"></div><div class="vd" style="left:118px;top:564px;height:15px"></div><div class="vd" style="left:137px;top:563px;height:16px"></div><div class="vd" style="left:156px;top:564px;height:8px"></div><div class="vd" style="left:156px;top:572px;height:7px"></div><div class="hd" style="left:157px;top:571px;width:10px"></div><div class="vd" style="left:61px;top:579px;height:16px"></div><div class="vd" style="left:99px;top:579px;height:16px"></div><div class="vd" style="left:118px;top:580px;height:15px"></div><div class="vd" style="left:137px;top:579px;height:16px"></div><div class="vd" style="left:156px;top:580px;height:8px"></div><div class="vd" style="left:156px;top:588px;height:7px"></div><div class="hd" style="left:157px;top:587px;width:10px"></div><div class="vd" style="left:61px;top:595px;height:16px"></div><div class="vd" style="left:99px;top:595px;height:16px"></div><div class="vd" style="left:118px;top:596px;height:15px"></div><div class="vd" style="left:137px;top:595px;height:16px"></div><div class="vd" style="left:156px;top:596px;height:8px"></div><div class="vd" style="left:156px;top:604px;height:7px"></div><div class="hd" style="left:157px;top:603px;width:10px"></div><div class="vd" style="left:61px;top:611px;height:16px"></div><div class="vd" style="left:99px;top:611px;height:16px"></div><div class="vd" style="left:118px;top:612px;height:15px"></div><div class="vd" style="left:137px;top:611px;height:16px"></div><div class="vd" style="left:156px;top:612px;height:8px"></div><div class="vd" style="left:156px;top:620px;height:7px"></div><div class="hd" style="left:157px;top:619px;width:10px"></div><div class="vd" style="left:61px;top:627px;height:16px"></div><div class="vd" style="left:99px;top:627px;height:16px"></div><div class="vd" style="left:118px;top:628px;height:15px"></div><div class="vd" style="left:137px;top:627px;height:16px"></div><div class="vd" style="left:156px;top:628px;height:8px"></div><div class="vd" style="left:156px;top:636px;height:7px"></div><div class="hd" style="left:157px;top:635px;width:10px"></div><div class="vd" style="left:61px;top:643px;height:16px"></div><div class="vd" style="left:99px;top:643px;height:16px"></div><div class="vd" style="left:118px;top:644px;height:15px"></div><div class="vd" style="left:137px;top:643px;height:16px"></div><div class="vd" style="left:156px;top:644px;height:8px"></div><div class="hd" style="left:157px;top:651px;width:10px"></div><div class="vd" style="left:61px;top:659px;height:16px"></div><div class="vd" style="left:99px;top:659px;height:16px"></div><div class="vd" style="left:118px;top:660px;height:15px"></div><div class="vd" style="left:137px;top:659px;height:9px"></div><div class="vd" style="left:137px;top:667px;height:8px"></div><div class="hd" style="left:139px;top:667px;width:9px"></div><div class="vd" style="left:61px;top:675px;height:16px"></div><div class="vd" style="left:99px;top:675px;height:16px"></div><div class="vd" style="left:118px;top:676px;height:15px"></div><div class="vd" style="left:137px;top:675px;height:16px"></div><div class="vd" style="left:156px;top:676px;height:8px"></div><div class="vd" style="left:156px;top:684px;height:7px"></div><div class="hd" style="left:157px;top:683px;width:10px"></div><div class="vd" style="left:61px;top:691px;height:16px"></div><div class="vd" style="left:99px;top:691px;height:16px"></div><div class="vd" style="left:118px;top:692px;height:15px"></div><div class="vd" style="left:137px;top:691px;height:16px"></div><div class="vd" style="left:156px;top:692px;height:8px"></div><div class="vd" style="left:156px;top:700px;height:7px"></div><div class="hd" style="left:157px;top:699px;width:10px"></div><div class="vd" style="left:61px;top:707px;height:16px"></div><div class="vd" style="left:99px;top:707px;height:16px"></div><div class="vd" style="left:118px;top:708px;height:15px"></div><div class="vd" style="left:137px;top:707px;height:16px"></div><div class="vd" style="left:156px;top:708px;height:8px"></div><div class="hd" style="left:157px;top:715px;width:10px"></div><div class="vd" style="left:61px;top:723px;height:16px"></div><div class="vd" style="left:99px;top:723px;height:16px"></div><div class="vd" style="left:118px;top:724px;height:15px"></div><div class="vd" style="left:137px;top:723px;height:9px"></div><div class="vd" style="left:137px;top:731px;height:8px"></div><div class="hd" style="left:139px;top:731px;width:9px"></div><div class="vd" style="left:61px;top:739px;height:16px"></div><div class="vd" style="left:99px;top:739px;height:16px"></div><div class="vd" style="left:118px;top:740px;height:15px"></div><div class="vd" style="left:137px;top:739px;height:16px"></div><div class="vd" style="left:156px;top:740px;height:8px"></div><div class="vd" style="left:156px;top:748px;height:7px"></div><div class="hd" style="left:157px;top:747px;width:10px"></div><div class="vd" style="left:61px;top:755px;height:16px"></div><div class="vd" style="left:99px;top:755px;height:16px"></div><div class="vd" style="left:118px;top:756px;height:15px"></div><div class="vd" style="left:137px;top:755px;height:16px"></div><div class="vd" style="left:156px;top:756px;height:8px"></div><div class="vd" style="left:156px;top:764px;height:7px"></div><div class="hd" style="left:157px;top:763px;width:10px"></div><div class="vd" style="left:61px;top:771px;height:16px"></div><div class="vd" style="left:99px;top:771px;height:16px"></div><div class="vd" style="left:118px;top:772px;height:15px"></div><div class="vd" style="left:137px;top:771px;height:16px"></div><div class="vd" style="left:156px;top:772px;height:8px"></div><div class="hd" style="left:157px;top:779px;width:10px"></div><div class="vd" style="left:61px;top:787px;height:16px"></div><div class="vd" style="left:99px;top:787px;height:16px"></div><div class="vd" style="left:118px;top:788px;height:15px"></div><div class="vd" style="left:137px;top:787px;height:9px"></div><div class="hd" style="left:139px;top:795px;width:9px"></div><div class="vd" style="left:61px;top:803px;height:16px"></div><div class="vd" style="left:99px;top:803px;height:16px"></div><div class="vd" style="left:118px;top:804px;height:8px"></div><div class="hd" style="left:119px;top:811px;width:10px"></div><div class="vd" style="left:61px;top:819px;height:16px"></div><div class="vd" style="left:99px;top:819px;height:9px"></div><div class="hd" style="left:101px;top:827px;width:9px"></div><div class="vd" style="left:61px;top:835px;height:9px"></div><div class="hd" style="left:63px;top:843px;width:9px"></div><svg class="px" style="left:57px;top:55px" width="9" height="9"><use href="#i-plus"/></svg><svg class="px" style="left:72px;top:51px" width="16" height="16"><use href="#i-folder"/></svg><div class="tt" style="left:93px;top:51px">Central Control Modules : DIN-AP2</div><svg class="px" style="left:57px;top:71px" width="9" height="9"><use href="#i-minus"/></svg><svg class="px" style="left:72px;top:67px" width="16" height="16"><use href="#i-ofolder"/></svg><div class="tt" style="left:93px;top:67px">Logic</div><svg class="px" style="left:76px;top:87px" width="9" height="9"><use href="#i-minus"/></svg><svg class="px" style="left:91px;top:83px" width="16" height="16"><use href="#i-ofolder"/></svg><div class="tt" style="left:112px;top:83px">S-1 : Logic</div><svg class="px" style="left:95px;top:103px" width="9" height="9"><use href="#i-plus"/></svg><svg class="px" style="left:110px;top:99px" width="16" height="16"><use href="#i-folder"/></svg><div class="tt" style="left:131px;top:99px">S-1.1 : Connect BAOS &amp; LON</div><svg class="px" style="left:95px;top:119px" width="9" height="9"><use href="#i-minus"/></svg><svg class="px" style="left:110px;top:115px" width="16" height="16"><use href="#i-ofolder"/></svg><div class="tt" style="left:131px;top:115px">S-1.2 : flow</div><svg class="px" style="left:114px;top:135px" width="9" height="9"><use href="#i-plus"/></svg><svg class="px" style="left:129px;top:131px" width="16" height="16"><use href="#i-folder"/></svg><div class="tt" style="left:150px;top:131px">S-1.2.1 : flow  SMS locking &amp; Relay control</div><svg class="px" style="left:114px;top:151px" width="9" height="9"><use href="#i-minus"/></svg><svg class="px" style="left:129px;top:147px" width="16" height="16"><use href="#i-ofolder"/></svg><div class="tt" style="left:150px;top:147px">S-1.2.2 : flow 1 floor</div><svg class="px" style="left:148px;top:163px" width="16" height="16"><use href="#i-modplus"/></svg><div class="tt" style="left:169px;top:163px">S-1.2.2.1 : flow control : WC (1 floor)</div><svg class="px" style="left:148px;top:179px" width="16" height="16"><use href="#i-modplus"/></svg><div class="tt" style="left:169px;top:179px">S-1.2.2.2 : flow control : Laundry (1 floor)</div><svg class="px" style="left:148px;top:195px" width="16" height="16"><use href="#i-modplus"/></svg><div class="tt" style="left:169px;top:195px">S-1.2.2.3 : flow control : kitchen (1 floor)</div><svg class="px" style="left:148px;top:211px" width="16" height="16"><use href="#i-modplus"/></svg><div class="tt" style="left:169px;top:211px">S-1.2.2.4 : flow control : stair radiator (1 floor)</div><svg class="px" style="left:148px;top:227px" width="16" height="16"><use href="#i-modplus"/></svg><div class="tt" style="left:169px;top:227px">S-1.2.2.5 : flow control : stair collector (1 floor)</div><svg class="px" style="left:148px;top:243px" width="16" height="16"><use href="#i-modplus"/></svg><div class="tt" style="left:169px;top:243px">S-1.2.2.6 : flow control : guest 1 radiator (1 floor)</div><svg class="px" style="left:148px;top:259px" width="16" height="16"><use href="#i-modplus"/></svg><div class="tt" style="left:169px;top:259px">S-1.2.2.7 : flow control : ITP (ALARM) (1 floor)</div><svg class="px" style="left:148px;top:275px" width="16" height="16"><use href="#i-modplus"/></svg><div class="tt" style="left:169px;top:275px">S-1.2.2.8 : flow control : Enter radiator (1 floor)</div><svg class="px" style="left:148px;top:291px" width="16" height="16"><use href="#i-modplus"/></svg><div class="tt" style="left:169px;top:291px">S-1.2.2.9 : flow control : Pantry collector (1 floor)</div><svg class="px" style="left:114px;top:311px" width="9" height="9"><use href="#i-plus"/></svg><svg class="px" style="left:129px;top:307px" width="16" height="16"><use href="#i-folder"/></svg><div class="tt" style="left:150px;top:307px">S-1.2.3 : flow 2 floor</div><svg class="px" style="left:114px;top:327px" width="9" height="9"><use href="#i-plus"/></svg><svg class="px" style="left:129px;top:323px" width="16" height="16"><use href="#i-folder"/></svg><div class="tt" style="left:150px;top:323px">S-1.2.4 : flow  Attic</div><svg class="px" style="left:114px;top:343px" width="9" height="9"><use href="#i-plus"/></svg><svg class="px" style="left:129px;top:339px" width="16" height="16"><use href="#i-folder"/></svg><div class="tt" style="left:150px;top:339px">S-1.2.5 : flow garage</div><svg class="px" style="left:114px;top:359px" width="9" height="9"><use href="#i-plus"/></svg><svg class="px" style="left:129px;top:355px" width="16" height="16"><use href="#i-folder"/></svg><div class="tt" style="left:150px;top:355px">S-1.2.6 : unused archive</div><svg class="px" style="left:95px;top:375px" width="9" height="9"><use href="#i-minus"/></svg><svg class="px" style="left:110px;top:371px" width="16" height="16"><use href="#i-ofolder"/></svg><div class="tt" style="left:131px;top:371px">S-1.3 : fuel level</div><svg class="px" style="left:129px;top:387px" width="16" height="16"><use href="#i-mod"/></svg><div class="tt" style="left:150px;top:387px">S-1.3.1 : fuel level</div><svg class="px" style="left:95px;top:407px" width="9" height="9"><use href="#i-minus"/></svg><svg class="px" style="left:110px;top:403px" width="16" height="16"><use href="#i-ofolder"/></svg><div class="tt" style="left:131px;top:403px">S-1.4 : LON</div><svg class="px" style="left:114px;top:423px" width="9" height="9"><use href="#i-minus"/></svg><svg class="px" style="left:129px;top:419px" width="16" height="16"><use href="#i-ofolder"/></svg><div class="tt" style="left:150px;top:419px">S-1.4.1 : in</div><svg class="px" style="left:133px;top:439px" width="9" height="9"><use href="#i-minus"/></svg><svg class="px" style="left:148px;top:435px" width="16" height="16"><use href="#i-ofolder"/></svg><div class="sel" style="left:167px;top:435px;width:112px"></div><div class="tt" style="left:169px;top:435px">S-1.4.1.1 : nvi_Regim</div><svg class="px" style="left:167px;top:451px" width="16" height="16"><use href="#i-mod"/></svg><div class="tt" style="left:188px;top:451px">S-1.4.1.1.1 : LON Switch Out</div><svg class="px" style="left:167px;top:467px" width="16" height="16"><use href="#i-wave"/></svg><div class="tt" style="left:188px;top:467px">S-1.4.1.1.2 : Analog Initialize</div><svg class="px" style="left:167px;top:483px" width="16" height="16"><use href="#i-bin"/></svg><div class="tt" style="left:188px;top:483px">S-1.4.1.1.3 : Interlock</div><svg class="px" style="left:167px;top:499px" width="16" height="16"><use href="#i-clock"/></svg><div class="tt" style="left:188px;top:499px">S-1.4.1.1.4 : One Shot : 0</div><svg class="px" style="left:167px;top:515px" width="16" height="16"><use href="#i-clock"/></svg><div class="tt" style="left:188px;top:515px">S-1.4.1.1.5 : One Shot : 1</div><svg class="px" style="left:167px;top:531px" width="16" height="16"><use href="#i-clock"/></svg><div class="tt" style="left:188px;top:531px">S-1.4.1.1.6 : One Shot : 2</div><svg class="px" style="left:167px;top:547px" width="16" height="16"><use href="#i-clock"/></svg><div class="tt" style="left:188px;top:547px">S-1.4.1.1.7 : One Shot : 3</div><svg class="px" style="left:167px;top:563px" width="16" height="16"><use href="#i-clock"/></svg><div class="tt" style="left:188px;top:563px">S-1.4.1.1.8 : One Shot : 1-2</div><svg class="px" style="left:167px;top:579px" width="16" height="16"><use href="#i-clock"/></svg><div class="tt" style="left:188px;top:579px">S-1.4.1.1.9 : One Shot : 2-2</div><svg class="px" style="left:167px;top:595px" width="16" height="16"><use href="#i-clock"/></svg><div class="tt" style="left:188px;top:595px">S-1.4.1.1.10 : One Shot : 3-2</div><svg class="px" style="left:167px;top:611px" width="16" height="16"><use href="#i-clock"/></svg><div class="tt" style="left:188px;top:611px">S-1.4.1.1.11 : One Shot : 4-2</div><svg class="px" style="left:167px;top:627px" width="16" height="16"><use href="#i-wave"/></svg><div class="tt" style="left:188px;top:627px">// S-1.4.1.1.12 : Analog Increment</div><svg class="px" style="left:167px;top:643px" width="16" height="16"><use href="#i-wave"/></svg><div class="tt" style="left:188px;top:643px">S-1.4.1.1.13 : Analog Scaler : Out 0 raw value to touchpanel</div><svg class="px" style="left:133px;top:663px" width="9" height="9"><use href="#i-minus"/></svg><svg class="px" style="left:148px;top:659px" width="16" height="16"><use href="#i-ofolder"/></svg><div class="tt" style="left:169px;top:659px">S-1.4.1.2 : nvi_ExtractSetpoint</div><svg class="px" style="left:167px;top:675px" width="16" height="16"><use href="#i-mod"/></svg><div class="tt" style="left:188px;top:675px">S-1.4.1.2.1 : LON Temp_P Out</div><svg class="px" style="left:167px;top:691px" width="16" height="16"><use href="#i-wave"/></svg><div class="tt" style="left:188px;top:691px">// S-1.4.1.2.2 : Analog Increment</div><svg class="px" style="left:167px;top:707px" width="16" height="16"><use href="#i-wave"/></svg><div class="tt" style="left:188px;top:707px">S-1.4.1.2.3 : Analog Increment with Optional Feedback</div><svg class="px" style="left:133px;top:727px" width="9" height="9"><use href="#i-minus"/></svg><svg class="px" style="left:148px;top:723px" width="16" height="16"><use href="#i-ofolder"/></svg><div class="tt" style="left:169px;top:723px">S-1.4.1.3 : nvi_SupplySetpoint</div><svg class="px" style="left:167px;top:739px" width="16" height="16"><use href="#i-mod"/></svg><div class="tt" style="left:188px;top:739px">S-1.4.1.3.1 : LON Temp_P Out</div><svg class="px" style="left:167px;top:755px" width="16" height="16"><use href="#i-wave"/></svg><div class="tt" style="left:188px;top:755px">// S-1.4.1.3.2 : Analog Increment</div><svg class="px" style="left:167px;top:771px" width="16" height="16"><use href="#i-wave"/></svg><div class="tt" style="left:188px;top:771px">S-1.4.1.3.3 : Analog Increment with Optional Feedback</div><svg class="px" style="left:133px;top:791px" width="9" height="9"><use href="#i-plus"/></svg><svg class="px" style="left:148px;top:787px" width="16" height="16"><use href="#i-folder"/></svg><div class="tt" style="left:169px;top:787px">S-1.4.1.4 : nvi_HumiditySetpoint</div><svg class="px" style="left:114px;top:807px" width="9" height="9"><use href="#i-plus"/></svg><svg class="px" style="left:129px;top:803px" width="16" height="16"><use href="#i-folder"/></svg><div class="tt" style="left:150px;top:803px">S-1.4.2 : out</div><svg class="px" style="left:95px;top:823px" width="9" height="9"><use href="#i-plus"/></svg><svg class="px" style="left:110px;top:819px" width="16" height="16"><use href="#i-folder"/></svg><div class="tt" style="left:131px;top:819px">S-1.5 : NVRAM</div><svg class="px" style="left:57px;top:839px" width="9" height="9"><use href="#i-plus"/></svg><svg class="px" style="left:72px;top:835px" width="16" height="16"><use href="#i-folder"/></svg><div class="tt" style="left:93px;top:835px">Signal List</div><div id="dlg"><div class="dtitle"></div><div class="rbtn"></div><div class="dttl">Search and Replace</div><div class="lab" style="left:12px;top:32px">Enter Substring to Replace:</div><div class="inp" style="left:11px;top:50px"><span class="hl">Valve_reset_floor_2</span></div><div class="lab" style="left:12px;top:81px">Enter New Substring:</div><div class="inp" style="left:11px;top:98px"><span>Valve_reset_Garage</span></div><div class="grp" style="left:11px;top:137px;width:192px;height:43px"></div><div class="lab glab" style="left:20px;top:130px">Apply to:</div><div class="radio on" style="left:18px;top:155px"></div><div class="lab" style="left:34px;top:154px">All</div><div class="radio" style="left:75px;top:155px"></div><div class="lab" style="left:92px;top:154px">Selected</div><div class="grp" style="left:11px;top:194px;width:192px;height:69px"></div><div class="lab glab" style="left:20px;top:187px">Which Items to Replace:</div><div class="chk" style="left:27px;top:212px"><svg width="13" height="13" style="position:absolute;left:-1px;top:-1px"><path d="M2.6 5.6 L5.6 9.6 L10.4 2.4" fill="none" stroke="#1e1e1e" stroke-width="2"/></svg></div><div class="lab" style="left:43px;top:211px">Inputs</div><div class="chk" style="left:113px;top:212px"><svg width="13" height="13" style="position:absolute;left:-1px;top:-1px"><path d="M2.6 5.6 L5.6 9.6 L10.4 2.4" fill="none" stroke="#1e1e1e" stroke-width="2"/></svg></div><div class="lab" style="left:129px;top:211px">Outputs</div><div class="chk" style="left:27px;top:238px"><svg width="13" height="13" style="position:absolute;left:-1px;top:-1px"><path d="M2.6 5.6 L5.6 9.6 L10.4 2.4" fill="none" stroke="#1e1e1e" stroke-width="2"/></svg></div><div class="lab" style="left:43px;top:237px">Parameters</div><div class="chk" style="left:113px;top:238px"><svg width="13" height="13" style="position:absolute;left:-1px;top:-1px"><path d="M2.6 5.6 L5.6 9.6 L10.4 2.4" fill="none" stroke="#1e1e1e" stroke-width="2"/></svg></div><div class="lab" style="left:129px;top:237px">Comments</div><div class="btn ok" style="left:29px;top:278px">OK</div><div class="btn" style="left:130px;top:278px">Cancel</div></div></body></html>
